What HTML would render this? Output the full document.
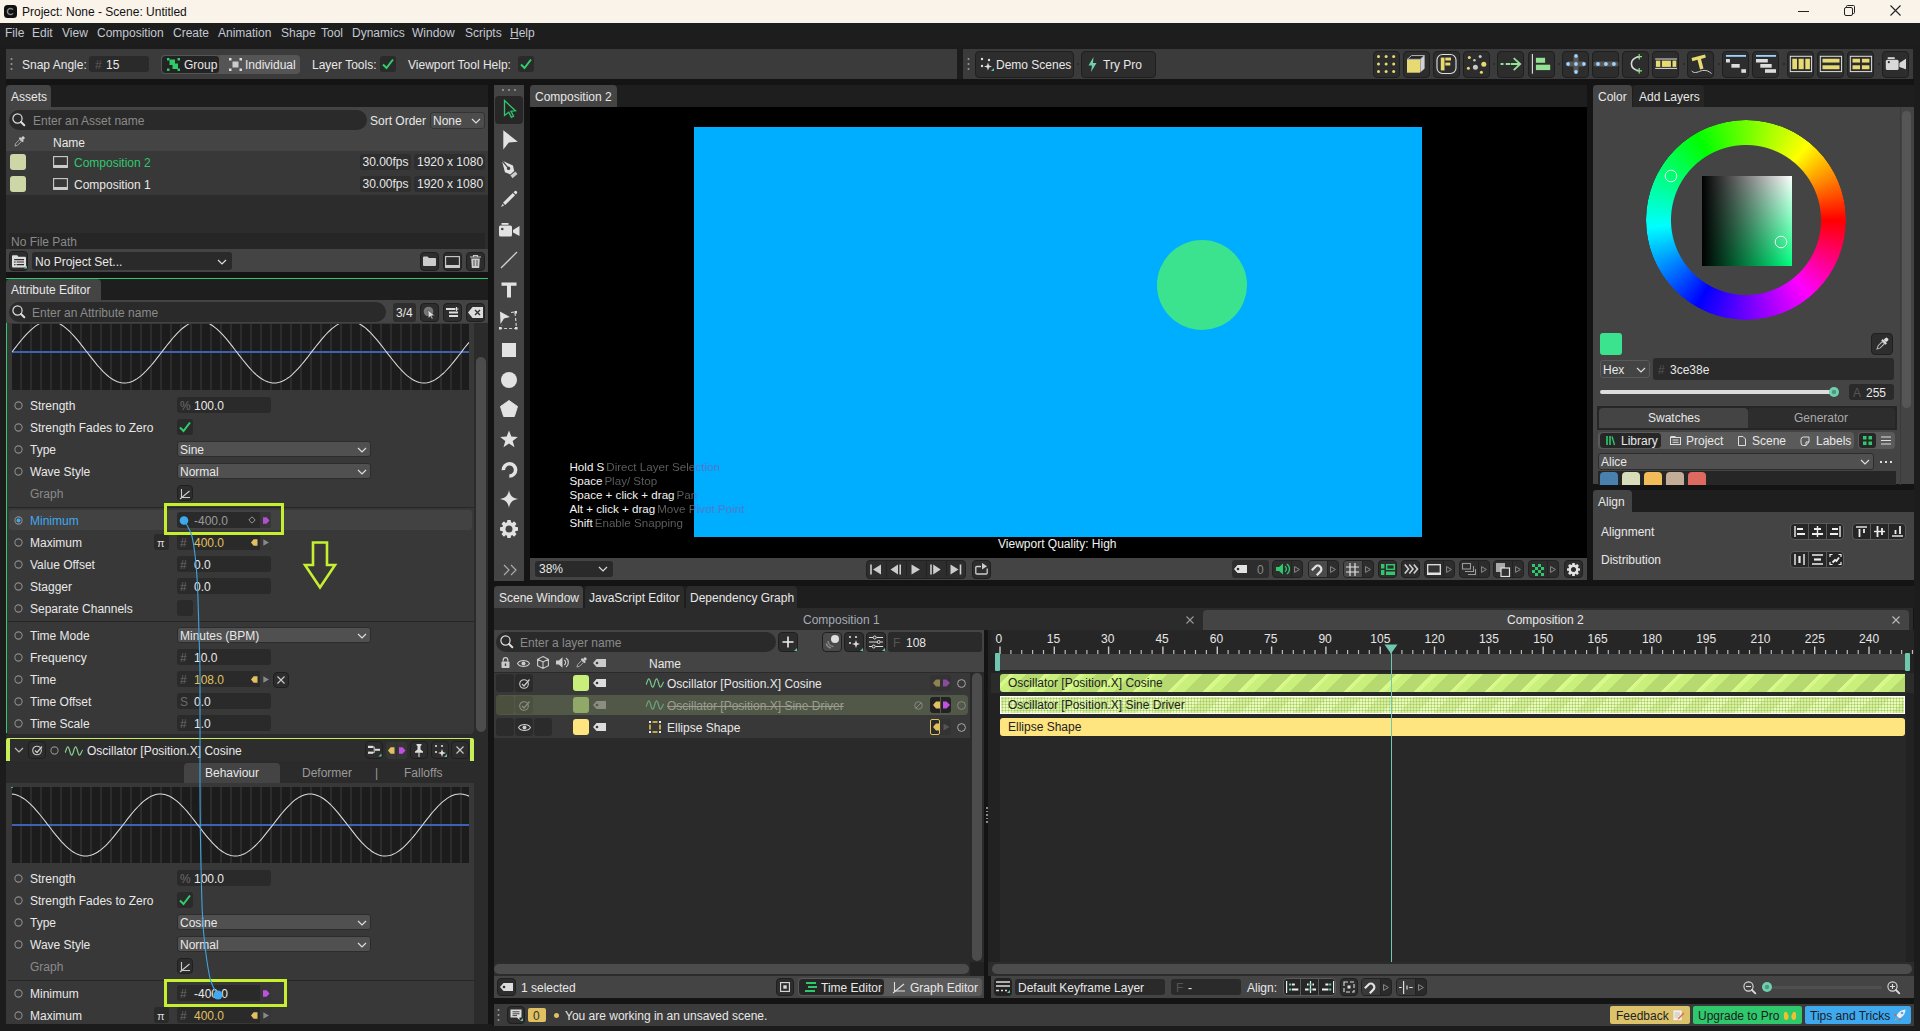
<!DOCTYPE html>
<html lang="en"><head><meta charset="utf-8"><title>Project: None - Scene: Untitled</title>
<style>
html,body{margin:0;padding:0}
body{width:1920px;height:1031px;overflow:hidden;position:relative;background:#1c1c1c;font-family:"Liberation Sans",sans-serif;font-size:12px;color:#e4e4e4}
.a{position:absolute;box-sizing:border-box}
.t{position:absolute;white-space:nowrap}
.f{background:#2a2a2a;border-radius:3px}
.b{background:#2d2d2d;border:1px solid #1f1f1f;border-radius:4px}
.dd{background:#505050;border:1px solid #2c2c2c;border-radius:3px}
svg{overflow:visible}
.hd{margin-left:2px;color:transparent;background:linear-gradient(90deg,#5e5e5e 694px,#5a70c2 694px) fixed;-webkit-background-clip:text;background-clip:text}
</style></head>
<body>
<div class="a" style="left:0px;top:0px;width:1920px;height:23px;background:#f9f3ea;"></div>
<svg class="a" style="left:4px;top:5px;" width="13" height="13" viewBox="0 0 13 13"><rect x="0" y="0" width="13" height="13" rx="3.5" fill="#111"/><path d="M9 4.6A3.1 3.1 0 1 0 9 8.4" fill="none" stroke="#888" stroke-width="1.5"/></svg>
<div class="t" style="left:22px;top:3px;height:18px;line-height:18px;color:#111;">Project: None - Scene: Untitled</div>
<svg class="a" style="left:1798px;top:11px;" width="11" height="1" viewBox="0 0 11 1"><rect width="11" height="1" fill="#222"/></svg>
<svg class="a" style="left:1844px;top:4.5px;" width="11" height="11" viewBox="0 0 11 11"><rect x="0.5" y="2.5" width="8" height="8" rx="1.5" fill="none" stroke="#222"/><path d="M2.5 2.5V1.5a1 1 0 0 1 1-1H9.5a1 1 0 0 1 1 1V7.5a1 1 0 0 1-1 1H8.5" fill="none" stroke="#222"/></svg>
<svg class="a" style="left:1889.5px;top:4.5px;" width="11" height="11" viewBox="0 0 11 11"><path d="M0.5 0.5L10.5 10.5M10.5 0.5L0.5 10.5" stroke="#222" stroke-width="1.1"/></svg>
<div class="a" style="left:0px;top:23px;width:1920px;height:21px;background:#1d1d1d;"></div>
<div class="t" style="left:5px;top:25px;height:16px;line-height:16px;color:#c3c8d2;">File</div>
<div class="t" style="left:32px;top:25px;height:16px;line-height:16px;color:#c3c8d2;">Edit</div>
<div class="t" style="left:62px;top:25px;height:16px;line-height:16px;color:#c3c8d2;">View</div>
<div class="t" style="left:97px;top:25px;height:16px;line-height:16px;color:#c3c8d2;">Composition</div>
<div class="t" style="left:173px;top:25px;height:16px;line-height:16px;color:#c3c8d2;">Create</div>
<div class="t" style="left:218px;top:25px;height:16px;line-height:16px;color:#c3c8d2;">Animation</div>
<div class="t" style="left:281px;top:25px;height:16px;line-height:16px;color:#c3c8d2;">Shape</div>
<div class="t" style="left:321px;top:25px;height:16px;line-height:16px;color:#c3c8d2;">Tool</div>
<div class="t" style="left:352px;top:25px;height:16px;line-height:16px;color:#c3c8d2;">Dynamics</div>
<div class="t" style="left:412px;top:25px;height:16px;line-height:16px;color:#c3c8d2;">Window</div>
<div class="t" style="left:465px;top:25px;height:16px;line-height:16px;color:#c3c8d2;">Scripts</div>
<div class="t" style="left:510px;top:25px;height:16px;line-height:16px;color:#c3c8d2;"><u>H</u>elp</div>
<div class="a" style="left:6px;top:49px;width:951px;height:30px;background:#3b3b3b;"></div>
<svg class="a" style="left:10px;top:57px;" width="3" height="14" viewBox="0 0 3 14"><circle cx="1.5" cy="2" r="1" fill="#999"/><circle cx="1.5" cy="7" r="1" fill="#999"/><circle cx="1.5" cy="12" r="1" fill="#999"/></svg>
<div class="t" style="left:22px;top:56.5px;height:16px;line-height:16px;color:#e8e8e8;">Snap Angle:</div>
<div class="a f" style="left:89px;top:56px;width:60px;height:16px;"></div>
<div class="t" style="left:95px;top:56.5px;height:16px;line-height:16px;color:#5a5a5a;">#</div>
<div class="t" style="left:106px;top:56.5px;height:16px;line-height:16px;color:#e8e8e8;">15</div>
<div class="a" style="left:161px;top:55px;width:139px;height:19px;background:#555;border-radius:4px"></div>
<div class="a" style="left:161px;top:55px;width:59px;height:19px;background:#232323;border-radius:4px;border:1px solid #555"></div>
<svg class="a" style="left:167px;top:58px;" width="13" height="13" viewBox="0 0 13 13"><g fill="#2fca6a"><rect x="0" y="0" width="2.5" height="2.5"/><rect x="10.5" y="0" width="2.5" height="2.5"/><rect x="0" y="10.5" width="2.5" height="2.5"/><rect x="10.5" y="10.5" width="2.5" height="2.5"/><rect x="2.5" y="1.5" width="5.5" height="5.5"/><rect x="5.5" y="5.5" width="5.5" height="5.5"/></g></svg>
<div class="t" style="left:184px;top:56.5px;height:16px;line-height:16px;color:#e8e8e8;">Group</div>
<svg class="a" style="left:229px;top:58px;" width="13" height="13" viewBox="0 0 13 13"><g fill="#ddd"><rect x="0" y="0" width="2.5" height="2.5"/><rect x="10.5" y="0" width="2.5" height="2.5"/><rect x="0" y="10.5" width="2.5" height="2.5"/><rect x="10.5" y="10.5" width="2.5" height="2.5"/><rect x="3.5" y="3.5" width="6" height="6" fill="#ccc"/></g></svg>
<div class="t" style="left:245px;top:56.5px;height:16px;line-height:16px;color:#e8e8e8;">Individual</div>
<div class="t" style="left:312px;top:56.5px;height:16px;line-height:16px;color:#e8e8e8;">Layer Tools:</div>
<div class="a f" style="left:380px;top:56px;width:16px;height:16px;"></div>
<svg class="a" style="left:380px;top:56px;" width="16" height="16" viewBox="0 0 16 16"><path d="M3 8.5L6.5 12L13 3.5" fill="none" stroke="#2fd06c" stroke-width="2"/></svg>
<div class="t" style="left:408px;top:56.5px;height:16px;line-height:16px;color:#e8e8e8;">Viewport Tool Help:</div>
<div class="a f" style="left:518px;top:56px;width:16px;height:16px;"></div>
<svg class="a" style="left:518px;top:56px;" width="16" height="16" viewBox="0 0 16 16"><path d="M3 8.5L6.5 12L13 3.5" fill="none" stroke="#2fd06c" stroke-width="2"/></svg>
<div class="a" style="left:963px;top:49px;width:950px;height:30px;background:#3b3b3b;"></div>
<svg class="a" style="left:967px;top:57px;" width="3" height="14" viewBox="0 0 3 14"><circle cx="1.5" cy="2" r="1" fill="#999"/><circle cx="1.5" cy="7" r="1" fill="#999"/><circle cx="1.5" cy="12" r="1" fill="#999"/></svg>
<div class="a b" style="left:975px;top:51px;width:99px;height:27px;"></div>
<svg class="a" style="left:980px;top:57px;" width="14" height="14" viewBox="0 0 14 14"><g fill="#ddd"><circle cx="2" cy="2" r="1.2"/><circle cx="9" cy="3" r="1.2"/><circle cx="2" cy="9" r="1.2"/><path d="M8 5.5L9 8.5L12 9.5L9 10.5L8 13.5L7 10.5L4 9.5L7 8.5Z"/></g><path d="M14 11v3h-3z" fill="#5fc7a0"/></svg>
<div class="t" style="left:996px;top:56.5px;height:16px;line-height:16px;color:#e8e8e8;">Demo Scenes</div>
<div class="a" style="left:1077px;top:63px;width:2px;height:2px;background:#2a2a2a;"></div>
<div class="a b" style="left:1081px;top:51px;width:75px;height:27px;"></div>
<svg class="a" style="left:1088px;top:57px;" width="9" height="15" viewBox="0 0 9 15"><path d="M5.5 0L0.5 8.5H4L3 15L8.5 6H5Z" fill="#6fd0aa"/></svg>
<div class="t" style="left:1103px;top:56.5px;height:16px;line-height:16px;color:#e8e8e8;">Try Pro</div>
<div class="a b" style="left:1373px;top:51px;width:27px;height:27px;"></div>
<svg class="a" style="left:1377px;top:55px" width="19" height="19" viewBox="0 0 19 19"><circle cx="1.5" cy="1.5" r="1.5" fill="#e8da72"/><circle cx="9.1" cy="1.5" r="1.5" fill="#e8da72"/><circle cx="16.7" cy="1.5" r="1.5" fill="#e8da72"/><circle cx="1.5" cy="9.1" r="1.5" fill="#e8da72"/><circle cx="9.1" cy="9.1" r="1.5" fill="#e8da72"/><circle cx="16.7" cy="9.1" r="1.5" fill="#e8da72"/><circle cx="1.5" cy="16.6" r="1.5" fill="#e8da72"/><circle cx="9.1" cy="16.6" r="1.5" fill="#e8da72"/><circle cx="16.7" cy="16.6" r="1.5" fill="#e8da72"/></svg>
<div class="a b" style="left:1403px;top:51px;width:27px;height:27px;"></div>
<svg class="a" style="left:1407px;top:55px" width="19" height="19" viewBox="0 0 19 19"><path d="M0 4.6H13V17.7H0Z" fill="#e8da72"/><path d="M0.3 4.3L4.6 0.6H17.4L13.2 4.3Z" fill="#222" stroke="#ddd" stroke-width="0.8"/><path d="M13.3 4.6L17.6 0.8V13.6L13.3 17.6Z" fill="#d2d2d2"/></svg>
<div class="a b" style="left:1433px;top:51px;width:27px;height:27px;"></div>
<svg class="a" style="left:1437px;top:55px" width="19" height="19" viewBox="0 0 19 19"><rect x="0" y="-0.5" width="19" height="19" rx="5.5" fill="none" stroke="#e0e0e0" stroke-width="1.1"/><rect x="3.8" y="2.6" width="3.7" height="12.8" fill="#e8da72"/><rect x="8.3" y="2.6" width="5.7" height="2.9" fill="#e8da72"/><rect x="8.3" y="7.6" width="5" height="2.9" fill="#e8da72"/></svg>
<div class="a b" style="left:1463px;top:51px;width:27px;height:27px;"></div>
<svg class="a" style="left:1467px;top:55px" width="19" height="19" viewBox="0 0 19 19"><circle cx="2.3" cy="2.4" r="1.5" fill="#e8da72"/><circle cx="16.8" cy="9.3" r="2.5" fill="#e8da72"/><circle cx="1.4" cy="13.3" r="1.5" fill="#e8da72"/><circle cx="14.4" cy="17.2" r="1.5" fill="#e8da72"/><circle cx="13.2" cy="1.4" r="1.5" fill="#c8c8c8"/><circle cx="7.4" cy="5.3" r="1.3" fill="#c8c8c8"/><circle cx="8.4" cy="12.3" r="2.5" fill="#c8c8c8"/></svg>
<div class="a" style="left:1493px;top:63px;width:2px;height:2px;background:#2a2a2a;"></div>
<div class="a b" style="left:1497px;top:51px;width:27px;height:27px;"></div>
<svg class="a" style="left:1501px;top:55px" width="19" height="19" viewBox="0 0 19 19"><path d="M-0.4 9H2.5M4.7 9H9.1M9.8 9H19" stroke="#94e094" stroke-width="1.8"/><path d="M12.7 3.1L19.2 9L12.7 15.1" fill="none" stroke="#94e094" stroke-width="1.8"/></svg>
<div class="a b" style="left:1528px;top:51px;width:27px;height:27px;"></div>
<svg class="a" style="left:1532px;top:55px" width="19" height="19" viewBox="0 0 19 19"><path d="M0.4 -1V18.7" stroke="#e0e0e0" stroke-width="1.1"/><rect x="3.9" y="2.8" width="9.2" height="5" fill="#94e094"/><rect x="3.9" y="9.7" width="14.3" height="5.4" fill="#94e094"/></svg>
<div class="a" style="left:1558px;top:63px;width:2px;height:2px;background:#2a2a2a;"></div>
<div class="a b" style="left:1562px;top:51px;width:27px;height:27px;"></div>
<svg class="a" style="left:1566px;top:55px" width="19" height="19" viewBox="0 0 19 19"><path d="M10 1V17M2 9H18" stroke="#585858" stroke-width="5"/><circle cx="10" cy="9" r="1.9" fill="#9ed2ff"/><circle cx="10" cy="0.9" r="1.9" fill="#9ed2ff"/><circle cx="10" cy="17" r="1.9" fill="#9ed2ff"/><circle cx="2" cy="9" r="1.9" fill="#9ed2ff"/><circle cx="18" cy="9" r="1.9" fill="#9ed2ff"/></svg>
<div class="a b" style="left:1592px;top:51px;width:27px;height:27px;"></div>
<svg class="a" style="left:1596px;top:55px" width="19" height="19" viewBox="0 0 19 19"><path d="M0 9H20" stroke="#585858" stroke-width="5" stroke-linecap="round"/><circle cx="2" cy="9" r="1.9" fill="#9ed2ff"/><circle cx="9.9" cy="9" r="1.9" fill="#9ed2ff"/><circle cx="17.9" cy="9" r="1.9" fill="#9ed2ff"/></svg>
<div class="a b" style="left:1622px;top:51px;width:27px;height:27px;"></div>
<svg class="a" style="left:1626px;top:55px" width="19" height="19" viewBox="0 0 19 19"><path d="M13.2 1.7C2.8 3.5 2.8 14 13.2 15.8" fill="none" stroke="#d8d8d8" stroke-width="1.6"/><path d="M13.2 -1V4.4M10.5 1.7H15.9M13.2 13.1V18.5M10.5 15.8H15.9" stroke="#94e094" stroke-width="1.2"/></svg>
<div class="a b" style="left:1652px;top:51px;width:27px;height:27px;"></div>
<svg class="a" style="left:1656px;top:55px" width="19" height="19" viewBox="0 0 19 19"><path d="M-0.8 4H21M-0.8 13.4H21" stroke="#e0e0e0" stroke-width="1"/><rect x="-0.1" y="5.6" width="4.4" height="6.3" fill="#e8da72"/><rect x="5.9" y="5.6" width="9" height="6.3" fill="#e8da72"/><rect x="16.5" y="5.6" width="3.8" height="6.3" fill="#e8da72"/></svg>
<div class="a" style="left:1683px;top:63px;width:2px;height:2px;background:#2a2a2a;"></div>
<div class="a b" style="left:1687px;top:51px;width:27px;height:27px;"></div>
<svg class="a" style="left:1691px;top:55px" width="19" height="19" viewBox="0 0 19 19"><path d="M0.5 3L14 -0.6L14.9 2.6L10 3.9L12.5 13.6L9 14.5L6.5 4.8L1.4 6.2Z" fill="#e8da72"/><path d="M0.7 16C4 19.5 8 16 11.5 15.5C15.5 15 17.5 16 20.5 18.5" fill="none" stroke="#d0d0d0" stroke-width="1"/></svg>
<div class="a" style="left:1718px;top:63px;width:2px;height:2px;background:#2a2a2a;"></div>
<div class="a b" style="left:1722px;top:51px;width:27px;height:27px;"></div>
<svg class="a" style="left:1726px;top:55px" width="19" height="19" viewBox="0 0 19 19"><path d="M0 0.9H20" stroke="#9ed2ff" stroke-width="1.8"/><rect x="0" y="4" width="3.9" height="3.5" fill="#dcdcdc"/><rect x="5.4" y="9" width="8.3" height="3.7" fill="#dcdcdc"/><rect x="15.3" y="14.2" width="4.7" height="3.6" fill="#dcdcdc"/></svg>
<div class="a b" style="left:1752px;top:51px;width:27px;height:27px;"></div>
<svg class="a" style="left:1756px;top:55px" width="19" height="19" viewBox="0 0 19 19"><path d="M0 0.9H20" stroke="#9ed2ff" stroke-width="1.8"/><rect x="0" y="4" width="11.8" height="3.5" fill="#dcdcdc"/><rect x="4.3" y="9" width="11.4" height="3.7" fill="#dcdcdc"/><rect x="9" y="14.2" width="11" height="3.6" fill="#dcdcdc"/></svg>
<div class="a" style="left:1783px;top:63px;width:2px;height:2px;background:#2a2a2a;"></div>
<div class="a b" style="left:1787px;top:51px;width:27px;height:27px;"></div>
<svg class="a" style="left:1791px;top:55px" width="19" height="19" viewBox="0 0 19 19"><rect x="-0.7" y="1.3" width="21.3" height="15.3" fill="none" stroke="#e0e0e0" stroke-width="1"/><rect x="1.3" y="3.75" width="4.7" height="10.4" fill="#e8da72"/><rect x="7.6" y="3.75" width="5.1" height="10.4" fill="#e8da72"/><rect x="14.3" y="3.75" width="4.6" height="10.4" fill="#e8da72"/></svg>
<div class="a b" style="left:1817px;top:51px;width:27px;height:27px;"></div>
<svg class="a" style="left:1821px;top:55px" width="19" height="19" viewBox="0 0 19 19"><rect x="-0.7" y="1.3" width="21.3" height="15.3" fill="none" stroke="#e0e0e0" stroke-width="1"/><rect x="1.5" y="3.75" width="17" height="3.8" fill="#e8da72"/><rect x="1.5" y="10.3" width="17" height="3.9" fill="#e8da72"/></svg>
<div class="a b" style="left:1847px;top:51px;width:27px;height:27px;"></div>
<svg class="a" style="left:1851px;top:55px" width="19" height="19" viewBox="0 0 19 19"><rect x="-0.7" y="1.3" width="21.3" height="15.3" fill="none" stroke="#e0e0e0" stroke-width="1"/><rect x="1.5" y="3.75" width="7.5" height="3.8" fill="#e8da72"/><rect x="10.9" y="3.75" width="7.5" height="3.8" fill="#e8da72"/><rect x="1.5" y="10.3" width="7.5" height="3.9" fill="#e8da72"/><rect x="10.9" y="10.3" width="7.5" height="3.9" fill="#e8da72"/></svg>
<div class="a" style="left:1878px;top:63px;width:2px;height:2px;background:#2a2a2a;"></div>
<div class="a b" style="left:1882px;top:51px;width:27px;height:27px;"></div>
<svg class="a" style="left:1886px;top:55px" width="19" height="19" viewBox="0 0 19 19"><rect x="-0.2" y="4.8" width="12.8" height="10.2" rx="1.5" fill="#d8d8d8"/><path d="M13.7 10L19.9 3.8V14.2L13.7 10.5Z" fill="#d8d8d8"/><path d="M13.4 8L19.9 3.8V14.2L13.4 12Z" fill="#d8d8d8"/><rect x="1.7" y="2.2" width="7" height="1.8" fill="#d8d8d8"/><circle cx="2.8" cy="7.2" r="1.1" fill="#2d2d2d"/></svg>
<div class="a" style="left:6px;top:79px;width:1908px;height:947px;background:#141414;"></div>
<div class="a" style="left:6px;top:85px;width:482px;height:22px;background:#1e1e1e;"></div>
<div class="a" style="left:6px;top:279px;width:482px;height:22px;background:#1e1e1e;"></div>
<div class="a" style="left:530px;top:85px;width:1057px;height:22px;background:#1e1e1e;"></div>
<div class="a" style="left:1593px;top:85px;width:321px;height:22px;background:#1e1e1e;"></div>
<div class="a" style="left:1593px;top:490px;width:321px;height:22px;background:#1e1e1e;"></div>
<div class="a" style="left:494px;top:586px;width:1420px;height:22px;background:#1e1e1e;"></div>
<div class="a" style="left:6px;top:85px;width:45px;height:22px;background:#444;border-radius:4px 4px 0 0"></div>
<div class="t" style="left:11px;top:88.5px;height:16px;line-height:16px;color:#e8e8e8;">Assets</div>
<div class="a" style="left:6px;top:107px;width:482px;height:45px;background:#444;"></div>
<div class="a" style="left:6px;top:151px;width:482px;height:44px;background:#383838;"></div>
<div class="a" style="left:6px;top:195px;width:482px;height:55px;background:#2c2c2c;"></div>
<div class="a" style="left:9px;top:110px;width:358px;height:20px;background:#2a2a2a;border-radius:10px"></div>
<svg class="a" style="left:12px;top:113px;" width="14" height="14" viewBox="0 0 14 14"><circle cx="5.5" cy="5.5" r="4.6" fill="none" stroke="#ddd" stroke-width="1.2"/><path d="M9 9L12.3 12.3" stroke="#ddd" stroke-width="2" stroke-linecap="round"/></svg>
<div class="t" style="left:33px;top:112.5px;height:16px;line-height:16px;color:#8a8a8a;">Enter an Asset name</div>
<div class="t" style="left:370px;top:112.5px;height:16px;line-height:16px;color:#e8e8e8;">Sort Order</div>
<div class="a dd" style="left:430px;top:112px;width:55px;height:17px;background:#4c4c4c;border-color:#333"></div>
<div class="t" style="left:433px;top:112.5px;height:16px;line-height:16px;color:#e8e8e8;">None</div>
<svg class="a" style="left:471px;top:118px;" width="10" height="6" viewBox="0 0 10 6"><path d="M1 1L5 5L9 1" fill="none" stroke="#ddd" stroke-width="1.2"/></svg>
<svg class="a" style="left:13px;top:135px;" width="13" height="13" viewBox="0 0 13 13"><g transform="rotate(45 6.5 6.5)"><rect x="5" y="0" width="3" height="3.2" rx="1" fill="#ccc"/><rect x="3.8" y="3" width="5.4" height="1.8" fill="#ccc"/><path d="M5.2 5h2.6v5.5L6.5 13L5.2 10.5Z" fill="none" stroke="#aaa" stroke-width="0.9"/></g></svg>
<div class="t" style="left:53px;top:134.8px;height:16px;line-height:16px;color:#e8e8e8;">Name</div>
<div class="a" style="left:10px;top:154px;width:16px;height:16px;background:#cdd6a6;border-radius:3px"></div>
<svg class="a" style="left:53px;top:156px;" width="15" height="12" viewBox="0 0 15 12"><rect x="0.6" y="0.6" width="13.8" height="10.8" fill="none" stroke="#ccc" stroke-width="1.1"/><rect x="0.6" y="9" width="13.8" height="2.6" fill="#ccc"/></svg>
<div class="t" style="left:74px;top:154.5px;height:16px;line-height:16px;color:#2fc86d;">Composition 2</div>
<div class="a" style="left:360px;top:154px;width:51px;height:16px;background:#2e2e2e;border-radius:3px"></div>
<div class="t" style="left:362.5px;top:154px;height:16px;line-height:16px;color:#e8e8e8;">30.00fps</div>
<div class="a" style="left:414px;top:154px;width:71px;height:16px;background:#2e2e2e;border-radius:3px"></div>
<div class="t" style="left:417px;top:154px;height:16px;line-height:16px;color:#e8e8e8;">1920 x 1080</div>
<div class="a" style="left:10px;top:176px;width:16px;height:16px;background:#cdd6a6;border-radius:3px"></div>
<svg class="a" style="left:53px;top:178px;" width="15" height="12" viewBox="0 0 15 12"><rect x="0.6" y="0.6" width="13.8" height="10.8" fill="none" stroke="#ccc" stroke-width="1.1"/><rect x="0.6" y="9" width="13.8" height="2.6" fill="#ccc"/></svg>
<div class="t" style="left:74px;top:176.5px;height:16px;line-height:16px;color:#e8e8e8;">Composition 1</div>
<div class="a" style="left:360px;top:176px;width:51px;height:16px;background:#2e2e2e;border-radius:3px"></div>
<div class="t" style="left:362.5px;top:176px;height:16px;line-height:16px;color:#e8e8e8;">30.00fps</div>
<div class="a" style="left:414px;top:176px;width:71px;height:16px;background:#2e2e2e;border-radius:3px"></div>
<div class="t" style="left:417px;top:176px;height:16px;line-height:16px;color:#e8e8e8;">1920 x 1080</div>
<div class="a" style="left:9px;top:233px;width:476px;height:16px;background:#262626;border-radius:2px"></div>
<div class="t" style="left:11px;top:234.3px;height:16px;line-height:16px;color:#8a8a8a;">No File Path</div>
<div class="a" style="left:6px;top:249px;width:482px;height:23px;background:#444;"></div>
<div class="a b" style="left:9px;top:251px;width:19px;height:20px;"></div>
<svg class="a" style="left:12px;top:255px;" width="14" height="13" viewBox="0 0 14 13"><path d="M0 1.2a1 1 0 0 1 1-1h4.2l1.2 1.6H13a1 1 0 0 1 1 1V11.5a1 1 0 0 1-1 1H1a1 1 0 0 1-1-1Z" fill="#ddd"/><path d="M2.2 4.6H12M4.6 7H12M4.6 9.6H12" stroke="#2d2d2d" stroke-width="1.1"/><rect x="2.2" y="6.4" width="1.3" height="1.3" fill="#2d2d2d"/><rect x="2.2" y="9" width="1.3" height="1.3" fill="#2d2d2d"/><path d="M15 10.5v3h-3z" fill="#5fc7a0"/></svg>
<div class="a" style="left:32px;top:252px;width:200px;height:18px;background:#2a2a2a;border-radius:3px"></div>
<div class="t" style="left:35px;top:254px;height:16px;line-height:16px;color:#e8e8e8;">No Project Set...</div>
<svg class="a" style="left:217px;top:259px;" width="10" height="6" viewBox="0 0 10 6"><path d="M1 1L5 5L9 1" fill="none" stroke="#ddd" stroke-width="1.2"/></svg>
<div class="a b" style="left:420px;top:252px;width:19px;height:19px;"></div>
<svg class="a" style="left:423px;top:256px;" width="13" height="10" viewBox="0 0 13 10"><path d="M0 1.5a1 1 0 0 1 1-1h3.5l1.5 1.5H12a1 1 0 0 1 1 1V9a1 1 0 0 1-1 1H1a1 1 0 0 1-1-1Z" fill="#ccc"/></svg>
<div class="a b" style="left:443px;top:252px;width:19px;height:19px;"></div>
<svg class="a" style="left:445px;top:256px;" width="15" height="12" viewBox="0 0 15 12"><rect x="0.6" y="0.6" width="13.8" height="10.8" fill="none" stroke="#ccc" stroke-width="1.1"/><rect x="0.6" y="9" width="13.8" height="2.6" fill="#ccc"/></svg>
<div class="a b" style="left:466px;top:252px;width:19px;height:19px;"></div>
<svg class="a" style="left:470px;top:255px;" width="11" height="13" viewBox="0 0 11 13"><path d="M0 2h11M3.5 2V0.5h4V2" stroke="#ccc" fill="none" stroke-width="1.2"/><path d="M1.2 3.5h8.6l-0.6 9.5H1.8Z" fill="#ccc"/><path d="M4 5v6M7 5v6" stroke="#444" stroke-width="0.9"/></svg>
<div class="a" style="left:6px;top:277.6px;width:482px;height:1.4px;background:#2fc86d;"></div>
<div class="a" style="left:6px;top:279px;width:95px;height:21px;background:#444;border-radius:4px 4px 0 0"></div>
<div class="t" style="left:11px;top:281.5px;height:16px;line-height:16px;color:#e8e8e8;">Attribute Editor</div>
<div class="a" style="left:6px;top:300px;width:482px;height:23px;background:#444;"></div>
<div class="a" style="left:6px;top:323px;width:482px;height:701px;background:#2b2b2b;"></div>
<div class="a" style="left:6px;top:323px;width:468px;height:411px;background:#383838;border-radius:0 0 4px 4px"></div>
<div class="a" style="left:6px;top:783px;width:468px;height:241px;background:#383838;"></div>
<div class="a" style="left:9px;top:302px;width:377px;height:20px;background:#2a2a2a;border-radius:10px"></div>
<svg class="a" style="left:12px;top:305px;" width="14" height="14" viewBox="0 0 14 14"><circle cx="5.5" cy="5.5" r="4.6" fill="none" stroke="#ddd" stroke-width="1.2"/><path d="M9 9L12.3 12.3" stroke="#ddd" stroke-width="2" stroke-linecap="round"/></svg>
<div class="t" style="left:32px;top:304.5px;height:16px;line-height:16px;color:#8a8a8a;">Enter an Attribute name</div>
<div class="a" style="left:393px;top:303px;width:23px;height:19px;background:#2e2e2e;border-radius:3px"></div>
<div class="t" style="left:396px;top:304.5px;height:16px;line-height:16px;color:#e8e8e8;">3/4</div>
<div class="a b" style="left:420px;top:303px;width:19px;height:19px;"></div>
<svg class="a" style="left:423px;top:306px;" width="13" height="13" viewBox="0 0 13 13"><circle cx="5.5" cy="5.5" r="4.8" fill="#777"/><path d="M5 4L11.5 9.5L8.6 9.8L10 12.6L8.8 13.1L7.5 10.3L5.4 12Z" fill="#ddd" stroke="#333" stroke-width="0.5"/></svg>
<div class="a b" style="left:443px;top:303px;width:19px;height:19px;"></div>
<svg class="a" style="left:446px;top:307px;" width="13" height="11" viewBox="0 0 13 11"><path d="M0 2h9M3 5.5h9M3 9h9" stroke="#ddd" stroke-width="1.8"/><path d="M10.5 0v4M8.5 2h4" stroke="#ddd" stroke-width="1.2"/></svg>
<div class="a b" style="left:466px;top:303px;width:19px;height:19px;"></div>
<svg class="a" style="left:468px;top:307px;" width="15" height="11" viewBox="0 0 15 11"><path d="M4.5 0H15V11H4.5L0 5.5Z" fill="#ddd"/><path d="M7 3L12 8M12 3L7 8" stroke="#333" stroke-width="1.4"/></svg>
<div class="a" style="left:476px;top:357px;width:10px;height:375px;background:#4c4c4c;border-radius:5px"></div>
<div class="a" style="left:6px;top:323px;width:1px;height:410px;background:#2fc86d;"></div>
<div class="a" style="left:12px;top:324px;width:457px;height:66px;background:#1c1c1c;background-image:repeating-linear-gradient(90deg,#1c1c1c 0,#1c1c1c 8px,#2c2c2c 8px,#2c2c2c 10px);"></div>
<svg class="a" style="left:12px;top:324px;overflow:hidden" width="457" height="66" viewBox="0 0 457 66"><path d="M0 28H457" stroke="#3c62b2" stroke-width="2"/><polyline points="0.0,28.0 2.0,25.4 4.0,22.9 6.0,20.3 7.9,17.9 9.9,15.5 11.9,13.1 13.9,10.9 15.9,8.8 17.9,6.9 19.9,5.1 21.9,3.4 23.8,1.9 25.8,0.6 27.8,-0.5 29.8,-1.4 31.8,-2.1 33.8,-2.6 35.8,-2.9 37.8,-3.0 39.7,-2.9 41.7,-2.5 43.7,-1.9 45.7,-1.2 47.7,-0.2 49.7,1.0 51.7,2.3 53.6,3.9 55.6,5.6 57.6,7.4 59.6,9.5 61.6,11.6 63.6,13.8 65.6,16.2 67.6,18.6 69.5,21.1 71.5,23.6 73.5,26.2 75.5,28.8 77.5,31.4 79.5,33.9 81.5,36.4 83.5,38.9 85.4,41.3 87.4,43.5 89.4,45.7 91.4,47.8 93.4,49.7 95.4,51.5 97.4,53.1 99.3,54.5 101.3,55.7 103.3,56.8 105.3,57.7 107.3,58.3 109.3,58.7 111.3,59.0 113.3,59.0 115.2,58.8 117.2,58.4 119.2,57.7 121.2,56.9 123.2,55.8 125.2,54.6 127.2,53.2 129.2,51.6 131.1,49.9 133.1,48.0 135.1,45.9 137.1,43.7 139.1,41.5 141.1,39.1 143.1,36.6 145.0,34.1 147.0,31.6 149.0,29.0 151.0,26.4 153.0,23.9 155.0,21.3 157.0,18.8 159.0,16.4 160.9,14.0 162.9,11.8 164.9,9.6 166.9,7.6 168.9,5.7 170.9,4.0 172.9,2.5 174.9,1.1 176.8,-0.1 178.8,-1.1 180.8,-1.9 182.8,-2.5 184.8,-2.8 186.8,-3.0 188.8,-2.9 190.7,-2.7 192.7,-2.2 194.7,-1.5 196.7,-0.6 198.7,0.5 200.7,1.8 202.7,3.3 204.7,4.9 206.6,6.7 208.6,8.7 210.6,10.7 212.6,12.9 214.6,15.2 216.6,17.6 218.6,20.1 220.6,22.6 222.5,25.2 224.5,27.8 226.5,30.4 228.5,32.9 230.5,35.5 232.5,37.9 234.5,40.3 236.4,42.7 238.4,44.9 240.4,47.0 242.4,49.0 244.4,50.8 246.4,52.5 248.4,54.0 250.4,55.3 252.3,56.4 254.3,57.3 256.3,58.1 258.3,58.6 260.3,58.9 262.3,59.0 264.3,58.9 266.3,58.5 268.2,58.0 270.2,57.2 272.2,56.3 274.2,55.1 276.2,53.8 278.2,52.3 280.2,50.6 282.1,48.7 284.1,46.7 286.1,44.6 288.1,42.4 290.1,40.0 292.1,37.6 294.1,35.1 296.1,32.6 298.0,30.0 300.0,27.4 302.0,24.9 304.0,22.3 306.0,19.8 308.0,17.3 310.0,14.9 312.0,12.6 313.9,10.5 315.9,8.4 317.9,6.5 319.9,4.7 321.9,3.1 323.9,1.6 325.9,0.4 327.8,-0.7 329.8,-1.6 331.8,-2.3 333.8,-2.7 335.8,-3.0 337.8,-3.0 339.8,-2.8 341.8,-2.4 343.7,-1.8 345.7,-1.0 347.7,0.1 349.7,1.3 351.7,2.7 353.7,4.2 355.7,6.0 357.7,7.9 359.6,9.9 361.6,12.1 363.6,14.3 365.6,16.7 367.6,19.1 369.6,21.6 371.6,24.2 373.5,26.8 375.5,29.3 377.5,31.9 379.5,34.5 381.5,37.0 383.5,39.4 385.5,41.8 387.5,44.0 389.4,46.2 391.4,48.2 393.4,50.1 395.4,51.8 397.4,53.4 399.4,54.8 401.4,56.0 403.4,57.0 405.3,57.8 407.3,58.4 409.3,58.8 411.3,59.0 413.3,59.0 415.3,58.7 417.3,58.2 419.2,57.6 421.2,56.7 423.2,55.6 425.2,54.3 427.2,52.9 429.2,51.2 431.2,49.5 433.2,47.5 435.1,45.5 437.1,43.3 439.1,41.0 441.1,38.6 443.1,36.1 445.1,33.6 447.1,31.0 449.1,28.5 451.0,25.9 453.0,23.3 455.0,20.8 457.0,18.3" fill="none" stroke="#dcdcdc" stroke-width="1.05"/></svg>
<svg class="a" style="left:14px;top:401.0px;" width="9" height="9" viewBox="0 0 9 9"><circle cx="4.5" cy="4.5" r="3.6" fill="none" stroke="#8a8a8a" stroke-width="1.1"/></svg>
<div class="t" style="left:30px;top:397.5px;height:16px;line-height:16px;color:#e8e8e8;">Strength</div>
<div class="a f" style="left:177px;top:397.0px;width:94px;height:16px;"></div>
<div class="t" style="left:180px;top:397.5px;height:16px;line-height:16px;color:#6a6a6a;">%</div>
<div class="t" style="left:194px;top:397.5px;height:16px;line-height:16px;color:#e8e8e8;">100.0</div>
<svg class="a" style="left:14px;top:423.0px;" width="9" height="9" viewBox="0 0 9 9"><circle cx="4.5" cy="4.5" r="3.6" fill="none" stroke="#8a8a8a" stroke-width="1.1"/></svg>
<div class="t" style="left:30px;top:419.5px;height:16px;line-height:16px;color:#e8e8e8;">Strength Fades to Zero</div>
<div class="a f" style="left:177px;top:419.0px;width:16px;height:16px;"></div>
<svg class="a" style="left:177px;top:419.0px;" width="16" height="16" viewBox="0 0 16 16"><path d="M3 8.5L6.5 12L13 3.5" fill="none" stroke="#2fd06c" stroke-width="2"/></svg>
<svg class="a" style="left:14px;top:445.0px;" width="9" height="9" viewBox="0 0 9 9"><circle cx="4.5" cy="4.5" r="3.6" fill="none" stroke="#8a8a8a" stroke-width="1.1"/></svg>
<div class="t" style="left:30px;top:441.5px;height:16px;line-height:16px;color:#e8e8e8;">Type</div>
<div class="a dd" style="left:177px;top:441.0px;width:194px;height:16px;"></div>
<div class="t" style="left:180px;top:441.5px;height:16px;line-height:16px;color:#e8e8e8;">Sine</div>
<svg class="a" style="left:357px;top:446.5px;" width="10" height="6" viewBox="0 0 10 6"><path d="M1 1L5 5L9 1" fill="none" stroke="#ddd" stroke-width="1.2"/></svg>
<svg class="a" style="left:14px;top:467.0px;" width="9" height="9" viewBox="0 0 9 9"><circle cx="4.5" cy="4.5" r="3.6" fill="none" stroke="#8a8a8a" stroke-width="1.1"/></svg>
<div class="t" style="left:30px;top:463.5px;height:16px;line-height:16px;color:#e8e8e8;">Wave Style</div>
<div class="a dd" style="left:177px;top:463.0px;width:194px;height:16px;"></div>
<div class="t" style="left:180px;top:463.5px;height:16px;line-height:16px;color:#e8e8e8;">Normal</div>
<svg class="a" style="left:357px;top:468.5px;" width="10" height="6" viewBox="0 0 10 6"><path d="M1 1L5 5L9 1" fill="none" stroke="#ddd" stroke-width="1.2"/></svg>
<div class="t" style="left:30px;top:485.5px;height:16px;line-height:16px;color:#8a8a8a;">Graph</div>
<div class="a b" style="left:177px;top:485.0px;width:16px;height:16px;"></div>
<svg class="a" style="left:180px;top:488.5px;" width="10" height="10" viewBox="0 0 10 10"><path d="M1.5 0V8.5H10" fill="none" stroke="#ccc" stroke-width="1.1"/><path d="M0 10L9.5 2" stroke="#ccc" stroke-width="1.1"/></svg>
<div class="a" style="left:8px;top:506.5px;width:466px;height:1px;background:#262626;"></div>
<div class="a" style="left:9px;top:510px;width:463px;height:20px;background:#424242;border-radius:3px"></div>
<svg class="a" style="left:14px;top:515.5px;" width="9" height="9" viewBox="0 0 9 9"><circle cx="4.5" cy="4.5" r="3.6" fill="none" stroke="#8a8a8a" stroke-width="1.1"/><circle cx="4.5" cy="4.5" r="2" fill="#3fa9f0"/></svg>
<div class="t" style="left:30px;top:512.6px;height:16px;line-height:16px;color:#3fa9f0;">Minimum</div>
<div class="a f" style="left:177px;top:512px;width:94px;height:16px;"></div>
<div class="t" style="left:194px;top:512.6px;height:16px;line-height:16px;color:#9a9a9a;">-400.0</div>
<svg class="a" style="left:179px;top:516px;" width="10" height="10" viewBox="0 0 10 10"><circle cx="5" cy="4.5" r="4.3" fill="#3fa9f0"/></svg>
<svg class="a" style="left:248px;top:516px;" width="8" height="8" viewBox="0 0 8 8"><path d="M4 0.8L7.2 4L4 7.2L0.8 4Z" fill="none" stroke="#999" stroke-width="1"/></svg>
<div class="a" style="left:260px;top:512px;width:11px;height:16px;background:#363636;border-radius:0 3px 3px 0"></div>
<svg class="a" style="left:263px;top:516.8px;" width="6.5" height="7" viewBox="0 0 6.5 7"><path d="M0 0.3H3.6L6.5 3.5L3.6 6.7H0Z" fill="#b04fd0"/></svg>
<svg class="a" style="left:14px;top:538.1px;" width="9" height="9" viewBox="0 0 9 9"><circle cx="4.5" cy="4.5" r="3.6" fill="none" stroke="#8a8a8a" stroke-width="1.1"/></svg>
<div class="t" style="left:30px;top:534.6px;height:16px;line-height:16px;color:#e8e8e8;">Maximum</div>
<div class="a f" style="left:177px;top:534.1px;width:94px;height:16px;"></div>
<div class="t" style="left:180px;top:534.6px;height:16px;line-height:16px;color:#6a6a6a;">#</div>
<div class="t" style="left:194px;top:534.6px;height:16px;line-height:16px;color:#e0c060;">400.0</div>
<div class="a" style="left:154px;top:534.1px;width:15px;height:16px;background:#2a2a2a;border-radius:3px"></div>
<div class="t" style="left:157px;top:534.6px;height:16px;line-height:16px;color:#ddd;font-size:11px;">π</div>
<div class="a" style="left:260px;top:534.1px;width:11px;height:16px;background:#363636;border-radius:0 3px 3px 0"></div>
<svg class="a" style="left:251px;top:539.1px;" width="6.5" height="7" viewBox="0 0 6.5 7"><path d="M0 3.5L2.6 0.3H6.5V6.7H2.6Z" fill="#e0c060"/></svg>
<svg class="a" style="left:263px;top:539.1px;" width="6" height="7" viewBox="0 0 6 7"><path d="M0.3 0.3L6 3.5L0.3 6.7Z" fill="#888"/></svg>
<svg class="a" style="left:14px;top:560.1px;" width="9" height="9" viewBox="0 0 9 9"><circle cx="4.5" cy="4.5" r="3.6" fill="none" stroke="#8a8a8a" stroke-width="1.1"/></svg>
<div class="t" style="left:30px;top:556.6px;height:16px;line-height:16px;color:#e8e8e8;">Value Offset</div>
<div class="a f" style="left:177px;top:556.1px;width:94px;height:16px;"></div>
<div class="t" style="left:180px;top:556.6px;height:16px;line-height:16px;color:#6a6a6a;">#</div>
<div class="t" style="left:194px;top:556.6px;height:16px;line-height:16px;color:#e8e8e8;">0.0</div>
<svg class="a" style="left:14px;top:582.1px;" width="9" height="9" viewBox="0 0 9 9"><circle cx="4.5" cy="4.5" r="3.6" fill="none" stroke="#8a8a8a" stroke-width="1.1"/></svg>
<div class="t" style="left:30px;top:578.6px;height:16px;line-height:16px;color:#e8e8e8;">Stagger</div>
<div class="a f" style="left:177px;top:578.1px;width:94px;height:16px;"></div>
<div class="t" style="left:180px;top:578.6px;height:16px;line-height:16px;color:#6a6a6a;">#</div>
<div class="t" style="left:194px;top:578.6px;height:16px;line-height:16px;color:#e8e8e8;">0.0</div>
<svg class="a" style="left:14px;top:604.1px;" width="9" height="9" viewBox="0 0 9 9"><circle cx="4.5" cy="4.5" r="3.6" fill="none" stroke="#8a8a8a" stroke-width="1.1"/></svg>
<div class="t" style="left:30px;top:600.6px;height:16px;line-height:16px;color:#e8e8e8;">Separate Channels</div>
<div class="a f" style="left:177px;top:600.1px;width:16px;height:16px;"></div>
<div class="a" style="left:8px;top:621px;width:466px;height:1px;background:#262626;"></div>
<svg class="a" style="left:14px;top:631.1px;" width="9" height="9" viewBox="0 0 9 9"><circle cx="4.5" cy="4.5" r="3.6" fill="none" stroke="#8a8a8a" stroke-width="1.1"/></svg>
<div class="t" style="left:30px;top:627.6px;height:16px;line-height:16px;color:#e8e8e8;">Time Mode</div>
<div class="a dd" style="left:177px;top:627.1px;width:194px;height:16px;"></div>
<div class="t" style="left:180px;top:627.6px;height:16px;line-height:16px;color:#e8e8e8;">Minutes (BPM)</div>
<svg class="a" style="left:357px;top:632.6px;" width="10" height="6" viewBox="0 0 10 6"><path d="M1 1L5 5L9 1" fill="none" stroke="#ddd" stroke-width="1.2"/></svg>
<svg class="a" style="left:14px;top:653.1px;" width="9" height="9" viewBox="0 0 9 9"><circle cx="4.5" cy="4.5" r="3.6" fill="none" stroke="#8a8a8a" stroke-width="1.1"/></svg>
<div class="t" style="left:30px;top:649.6px;height:16px;line-height:16px;color:#e8e8e8;">Frequency</div>
<div class="a f" style="left:177px;top:649.1px;width:94px;height:16px;"></div>
<div class="t" style="left:180px;top:649.6px;height:16px;line-height:16px;color:#6a6a6a;">#</div>
<div class="t" style="left:194px;top:649.6px;height:16px;line-height:16px;color:#e8e8e8;">10.0</div>
<svg class="a" style="left:14px;top:675.1px;" width="9" height="9" viewBox="0 0 9 9"><circle cx="4.5" cy="4.5" r="3.6" fill="none" stroke="#8a8a8a" stroke-width="1.1"/></svg>
<div class="t" style="left:30px;top:671.6px;height:16px;line-height:16px;color:#e8e8e8;">Time</div>
<div class="a f" style="left:177px;top:671.1px;width:94px;height:16px;"></div>
<div class="t" style="left:180px;top:671.6px;height:16px;line-height:16px;color:#6a6a6a;">#</div>
<div class="t" style="left:194px;top:671.6px;height:16px;line-height:16px;color:#e0c060;">108.0</div>
<div class="a" style="left:260px;top:671.1px;width:11px;height:16px;background:#363636;border-radius:0 3px 3px 0"></div>
<svg class="a" style="left:251px;top:676.1px;" width="6.5" height="7" viewBox="0 0 6.5 7"><path d="M0 3.5L2.6 0.3H6.5V6.7H2.6Z" fill="#e0c060"/></svg>
<svg class="a" style="left:263px;top:676.1px;" width="6" height="7" viewBox="0 0 6 7"><path d="M0.3 0.3L6 3.5L0.3 6.7Z" fill="#888"/></svg>
<div class="a b" style="left:273px;top:671.5px;width:16px;height:16px;"></div>
<svg class="a" style="left:277px;top:675.5px;" width="8" height="8" viewBox="0 0 8 8"><path d="M0.5 0.5L7.5 7.5M7.5 0.5L0.5 7.5" stroke="#ccc" stroke-width="1.1"/></svg>
<svg class="a" style="left:14px;top:697.1px;" width="9" height="9" viewBox="0 0 9 9"><circle cx="4.5" cy="4.5" r="3.6" fill="none" stroke="#8a8a8a" stroke-width="1.1"/></svg>
<div class="t" style="left:30px;top:693.6px;height:16px;line-height:16px;color:#e8e8e8;">Time Offset</div>
<div class="a f" style="left:177px;top:693.1px;width:94px;height:16px;"></div>
<div class="t" style="left:180px;top:693.6px;height:16px;line-height:16px;color:#6a6a6a;">S</div>
<div class="t" style="left:194px;top:693.6px;height:16px;line-height:16px;color:#e8e8e8;">0.0</div>
<svg class="a" style="left:14px;top:719.1px;" width="9" height="9" viewBox="0 0 9 9"><circle cx="4.5" cy="4.5" r="3.6" fill="none" stroke="#8a8a8a" stroke-width="1.1"/></svg>
<div class="t" style="left:30px;top:715.6px;height:16px;line-height:16px;color:#e8e8e8;">Time Scale</div>
<div class="a f" style="left:177px;top:715.1px;width:94px;height:16px;"></div>
<div class="t" style="left:180px;top:715.6px;height:16px;line-height:16px;color:#6a6a6a;">#</div>
<div class="t" style="left:194px;top:715.6px;height:16px;line-height:16px;color:#e8e8e8;">1.0</div>
<div class="a" style="left:6px;top:738px;width:468px;height:23px;background:#2d2d2d;border-top:1.5px solid #c6ee5a;border-radius:3px 3px 0 0"></div>
<div class="a" style="left:6px;top:738px;width:3.5px;height:23px;background:#c6ee5a;border-radius:3px 0 0 0"></div>
<div class="a" style="left:470px;top:738px;width:4px;height:23px;background:#c6ee5a;border-radius:0 3px 0 0"></div>
<svg class="a" style="left:14px;top:747px;" width="10" height="6" viewBox="0 0 10 6"><path d="M1 1L5 5L9 1" fill="none" stroke="#bbb" stroke-width="1.2"/></svg>
<div class="a b" style="left:28px;top:741px;width:18px;height:18px;"></div>
<svg class="a" style="left:32px;top:745px;" width="11" height="11" viewBox="0 0 11 11"><circle cx="5" cy="5.5" r="4.3" fill="none" stroke="#ccc" stroke-width="1.1"/><path d="M3 5.5L5 7.5L10 1.5" fill="none" stroke="#ccc" stroke-width="1.2"/></svg>
<svg class="a" style="left:50px;top:745.5px;" width="9" height="9" viewBox="0 0 9 9"><circle cx="4.5" cy="4.5" r="3.6" fill="none" stroke="#8a8a8a" stroke-width="1.1"/></svg>
<svg class="a" style="left:64.5px;top:746px;" width="18" height="10" viewBox="0 0 18 10"><path d="M0 6.5C0.8 6.5 1.4 0.8 2.8 0.8C4.6 0.8 4.9 9.2 6.7 9.2C8.5 9.2 8.8 0.8 10.6 0.8C12.4 0.8 12.7 9.2 14.5 9.2C16 9.2 16.6 4 18 4" fill="none" stroke="#86d08f" stroke-width="1.2"/></svg>
<div class="t" style="left:87px;top:742.6px;height:16px;line-height:16px;color:#e8e8e8;">Oscillator [Position.X] Cosine</div>
<div class="a b" style="left:365px;top:741px;width:18px;height:18px;"></div>
<svg class="a" style="left:368px;top:745px;" width="13" height="11" viewBox="0 0 13 11"><rect x="0" y="0.8" width="5" height="2.2" fill="#ddd"/><rect x="0" y="6.6" width="5" height="2.2" fill="#ddd"/><path d="M5 1.9H6.2V7.7H5" fill="none" stroke="#ddd" stroke-width="1"/><path d="M7 4.8H12" stroke="#ddd" stroke-width="2"/><path d="M13.5 8.5v3h-3z" fill="#5fc7a0"/></svg>
<div class="a" style="left:386px;top:742px;width:21px;height:17px;background:#353535;border-radius:3px"></div>
<div class="a" style="left:396px;top:742px;width:1px;height:17px;background:#2d2d2d;"></div>
<svg class="a" style="left:388px;top:746.5px;" width="6.5" height="7" viewBox="0 0 6.5 7"><path d="M0 3.5L2.6 0.3H6.5V6.7H2.6Z" fill="#e0c060"/></svg>
<svg class="a" style="left:399px;top:746.5px;" width="6.5" height="7" viewBox="0 0 6.5 7"><path d="M0 0.3H3.6L6.5 3.5L3.6 6.7H0Z" fill="#c050e0"/></svg>
<div class="a b" style="left:410px;top:741px;width:18px;height:18px;"></div>
<svg class="a" style="left:414px;top:744px;" width="10" height="13" viewBox="0 0 10 13"><path d="M2.5 0h5v1.2l-1 0.8v3.5l2.5 2v1.2H1v-1.2l2.5-2V2L2.5 1.2Z" fill="#ddd"/><path d="M5 8.5V13" stroke="#ddd" stroke-width="1.1"/></svg>
<div class="a b" style="left:431px;top:741px;width:18px;height:18px;"></div>
<svg class="a" style="left:434px;top:744px;" width="13" height="13" viewBox="0 0 13 13"><g fill="#ddd"><circle cx="2" cy="2" r="1.1"/><circle cx="8" cy="2" r="1.1"/><circle cx="2" cy="8" r="1.1"/><path d="M8 5L9 8L12 9L9 10L8 13L7 10L4 9L7 8Z"/></g><path d="M13 10v3h-3z" fill="#5fc7a0"/></svg>
<div class="a b" style="left:451px;top:741px;width:18px;height:18px;"></div>
<svg class="a" style="left:456px;top:746px;" width="8" height="8" viewBox="0 0 8 8"><path d="M0.5 0.5L7.5 7.5M7.5 0.5L0.5 7.5" stroke="#ccc" stroke-width="1.1"/></svg>
<div class="a" style="left:184px;top:763px;width:96px;height:20px;background:#444;border-radius:4px 4px 0 0"></div>
<div class="t" style="left:205px;top:764.5px;height:16px;line-height:16px;color:#e8e8e8;">Behaviour</div>
<div class="t" style="left:302px;top:764.5px;height:16px;line-height:16px;color:#9a9a9a;">Deformer</div>
<div class="t" style="left:375px;top:764.5px;height:16px;line-height:16px;color:#9a9a9a;">|</div>
<div class="t" style="left:404px;top:764.5px;height:16px;line-height:16px;color:#9a9a9a;">Falloffs</div>
<div class="a" style="left:12px;top:787px;width:457px;height:76px;background:#1c1c1c;background-image:repeating-linear-gradient(90deg,#1c1c1c 0,#1c1c1c 8px,#2c2c2c 8px,#2c2c2c 10px);"></div>
<svg class="a" style="left:12px;top:787px;overflow:hidden" width="457" height="76" viewBox="0 0 457 76"><path d="M0 38H457" stroke="#3c62b2" stroke-width="2"/><polyline points="0.0,7.1 2.0,7.3 4.0,7.8 6.0,8.5 7.9,9.4 9.9,10.5 11.9,11.7 13.9,13.2 15.9,14.8 17.9,16.6 19.9,18.6 21.9,20.6 23.8,22.8 25.8,25.2 27.8,27.5 29.8,30.0 31.8,32.5 33.8,35.1 35.8,37.7 37.8,40.3 39.7,42.8 41.7,45.3 43.7,47.8 45.7,50.2 47.7,52.6 49.7,54.8 51.7,56.9 53.6,58.9 55.6,60.7 57.6,62.4 59.6,63.9 61.6,65.2 63.6,66.4 65.6,67.3 67.6,68.1 69.5,68.6 71.5,68.9 73.5,69.0 75.5,68.9 77.5,68.6 79.5,68.0 81.5,67.3 83.5,66.3 85.4,65.2 87.4,63.8 89.4,62.3 91.4,60.6 93.4,58.8 95.4,56.8 97.4,54.7 99.3,52.5 101.3,50.1 103.3,47.7 105.3,45.2 107.3,42.7 109.3,40.1 111.3,37.5 113.3,35.0 115.2,32.4 117.2,29.9 119.2,27.4 121.2,25.0 123.2,22.7 125.2,20.5 127.2,18.5 129.2,16.5 131.1,14.7 133.1,13.1 135.1,11.7 137.1,10.4 139.1,9.3 141.1,8.4 143.1,7.8 145.0,7.3 147.0,7.0 149.0,7.0 151.0,7.2 153.0,7.6 155.0,8.2 157.0,9.0 159.0,10.0 160.9,11.2 162.9,12.6 164.9,14.2 166.9,15.9 168.9,17.8 170.9,19.8 172.9,22.0 174.9,24.2 176.8,26.6 178.8,29.0 180.8,31.5 182.8,34.1 184.8,36.7 186.8,39.2 188.8,41.8 190.7,44.4 192.7,46.9 194.7,49.3 196.7,51.7 198.7,53.9 200.7,56.1 202.7,58.1 204.7,60.0 206.6,61.8 208.6,63.3 210.6,64.7 212.6,65.9 214.6,67.0 216.6,67.8 218.6,68.4 220.6,68.8 222.5,69.0 224.5,69.0 226.5,68.7 228.5,68.3 230.5,67.6 232.5,66.7 234.5,65.6 236.4,64.4 238.4,62.9 240.4,61.3 242.4,59.5 244.4,57.6 246.4,55.5 248.4,53.3 250.4,51.1 252.3,48.7 254.3,46.2 256.3,43.7 258.3,41.1 260.3,38.6 262.3,36.0 264.3,33.4 266.3,30.9 268.2,28.4 270.2,26.0 272.2,23.6 274.2,21.4 276.2,19.3 278.2,17.3 280.2,15.4 282.1,13.7 284.1,12.2 286.1,10.9 288.1,9.7 290.1,8.8 292.1,8.0 294.1,7.5 296.1,7.1 298.0,7.0 300.0,7.1 302.0,7.4 304.0,7.9 306.0,8.7 308.0,9.6 310.0,10.7 312.0,12.0 313.9,13.5 315.9,15.2 317.9,17.0 319.9,19.0 321.9,21.1 323.9,23.3 325.9,25.7 327.8,28.1 329.8,30.6 331.8,33.1 333.8,35.6 335.8,38.2 337.8,40.8 339.8,43.4 341.8,45.9 343.7,48.4 345.7,50.8 347.7,53.1 349.7,55.3 351.7,57.4 353.7,59.3 355.7,61.1 357.7,62.7 359.6,64.2 361.6,65.5 363.6,66.6 365.6,67.5 367.6,68.2 369.6,68.7 371.6,68.9 373.5,69.0 375.5,68.8 377.5,68.5 379.5,67.9 381.5,67.1 383.5,66.1 385.5,64.9 387.5,63.5 389.4,62.0 391.4,60.3 393.4,58.4 395.4,56.4 397.4,54.2 399.4,52.0 401.4,49.6 403.4,47.2 405.3,44.7 407.3,42.1 409.3,39.6 411.3,37.0 413.3,34.4 415.3,31.9 417.3,29.4 419.2,26.9 421.2,24.5 423.2,22.3 425.2,20.1 427.2,18.0 429.2,16.1 431.2,14.4 433.2,12.8 435.1,11.4 437.1,10.1 439.1,9.1 441.1,8.3 443.1,7.6 445.1,7.2 447.1,7.0 449.1,7.0 451.0,7.3 453.0,7.7 455.0,8.3 457.0,9.2" fill="none" stroke="#dcdcdc" stroke-width="1.05"/></svg>
<div class="a" style="left:11px;top:787px;width:2px;height:1px;background:#2fc86d;"></div>
<svg class="a" style="left:14px;top:874.0px;" width="9" height="9" viewBox="0 0 9 9"><circle cx="4.5" cy="4.5" r="3.6" fill="none" stroke="#8a8a8a" stroke-width="1.1"/></svg>
<div class="t" style="left:30px;top:870.5px;height:16px;line-height:16px;color:#e8e8e8;">Strength</div>
<div class="a f" style="left:177px;top:870.0px;width:94px;height:16px;"></div>
<div class="t" style="left:180px;top:870.5px;height:16px;line-height:16px;color:#6a6a6a;">%</div>
<div class="t" style="left:194px;top:870.5px;height:16px;line-height:16px;color:#e8e8e8;">100.0</div>
<svg class="a" style="left:14px;top:896.0px;" width="9" height="9" viewBox="0 0 9 9"><circle cx="4.5" cy="4.5" r="3.6" fill="none" stroke="#8a8a8a" stroke-width="1.1"/></svg>
<div class="t" style="left:30px;top:892.5px;height:16px;line-height:16px;color:#e8e8e8;">Strength Fades to Zero</div>
<div class="a f" style="left:177px;top:892.0px;width:16px;height:16px;"></div>
<svg class="a" style="left:177px;top:892.0px;" width="16" height="16" viewBox="0 0 16 16"><path d="M3 8.5L6.5 12L13 3.5" fill="none" stroke="#2fd06c" stroke-width="2"/></svg>
<svg class="a" style="left:14px;top:918.0px;" width="9" height="9" viewBox="0 0 9 9"><circle cx="4.5" cy="4.5" r="3.6" fill="none" stroke="#8a8a8a" stroke-width="1.1"/></svg>
<div class="t" style="left:30px;top:914.5px;height:16px;line-height:16px;color:#e8e8e8;">Type</div>
<div class="a dd" style="left:177px;top:914.0px;width:194px;height:16px;"></div>
<div class="t" style="left:180px;top:914.5px;height:16px;line-height:16px;color:#e8e8e8;">Cosine</div>
<svg class="a" style="left:357px;top:919.5px;" width="10" height="6" viewBox="0 0 10 6"><path d="M1 1L5 5L9 1" fill="none" stroke="#ddd" stroke-width="1.2"/></svg>
<svg class="a" style="left:14px;top:940.0px;" width="9" height="9" viewBox="0 0 9 9"><circle cx="4.5" cy="4.5" r="3.6" fill="none" stroke="#8a8a8a" stroke-width="1.1"/></svg>
<div class="t" style="left:30px;top:936.5px;height:16px;line-height:16px;color:#e8e8e8;">Wave Style</div>
<div class="a dd" style="left:177px;top:936.0px;width:194px;height:16px;"></div>
<div class="t" style="left:180px;top:936.5px;height:16px;line-height:16px;color:#e8e8e8;">Normal</div>
<svg class="a" style="left:357px;top:941.5px;" width="10" height="6" viewBox="0 0 10 6"><path d="M1 1L5 5L9 1" fill="none" stroke="#ddd" stroke-width="1.2"/></svg>
<div class="t" style="left:30px;top:958.5px;height:16px;line-height:16px;color:#8a8a8a;">Graph</div>
<div class="a b" style="left:177px;top:958.0px;width:16px;height:16px;"></div>
<svg class="a" style="left:180px;top:961.5px;" width="10" height="10" viewBox="0 0 10 10"><path d="M1.5 0V8.5H10" fill="none" stroke="#ccc" stroke-width="1.1"/><path d="M0 10L9.5 2" stroke="#ccc" stroke-width="1.1"/></svg>
<div class="a" style="left:8px;top:979.5px;width:466px;height:1px;background:#262626;"></div>
<svg class="a" style="left:14px;top:989.1px;" width="9" height="9" viewBox="0 0 9 9"><circle cx="4.5" cy="4.5" r="3.6" fill="none" stroke="#8a8a8a" stroke-width="1.1"/></svg>
<div class="t" style="left:30px;top:985.6px;height:16px;line-height:16px;color:#e8e8e8;">Minimum</div>
<div class="a f" style="left:177px;top:985.1px;width:94px;height:16px;"></div>
<div class="t" style="left:180px;top:985.6px;height:16px;line-height:16px;color:#6a6a6a;">#</div>
<div class="t" style="left:194px;top:985.6px;height:16px;line-height:16px;color:#e8e8e8;">-400.0</div>
<div class="a" style="left:260px;top:985.1px;width:11px;height:16px;background:#363636;border-radius:0 3px 3px 0"></div>
<svg class="a" style="left:263px;top:990.2px;" width="6.5" height="7" viewBox="0 0 6.5 7"><path d="M0 0.3H3.6L6.5 3.5L3.6 6.7H0Z" fill="#c050e0"/></svg>
<svg class="a" style="left:14px;top:1011.1px;" width="9" height="9" viewBox="0 0 9 9"><circle cx="4.5" cy="4.5" r="3.6" fill="none" stroke="#8a8a8a" stroke-width="1.1"/></svg>
<div class="t" style="left:30px;top:1007.6px;height:16px;line-height:16px;color:#e8e8e8;">Maximum</div>
<div class="a f" style="left:177px;top:1007.1px;width:94px;height:16px;"></div>
<div class="t" style="left:180px;top:1007.6px;height:16px;line-height:16px;color:#6a6a6a;">#</div>
<div class="t" style="left:194px;top:1007.6px;height:16px;line-height:16px;color:#e0c060;">400.0</div>
<div class="a" style="left:154px;top:1007.1px;width:15px;height:16px;background:#2a2a2a;border-radius:3px"></div>
<div class="t" style="left:157px;top:1007.6px;height:16px;line-height:16px;color:#ddd;font-size:11px;">π</div>
<div class="a" style="left:260px;top:1007.1px;width:11px;height:16px;background:#363636;border-radius:0 3px 3px 0"></div>
<svg class="a" style="left:251px;top:1012.1px;" width="6.5" height="7" viewBox="0 0 6.5 7"><path d="M0 3.5L2.6 0.3H6.5V6.7H2.6Z" fill="#e0c060"/></svg>
<svg class="a" style="left:263px;top:1012.1px;" width="6" height="7" viewBox="0 0 6 7"><path d="M0.3 0.3L6 3.5L0.3 6.7Z" fill="#888"/></svg>
<div class="a" style="left:0px;top:1024px;width:492px;height:7px;background:#1c1c1c;"></div>
<div class="a" style="left:494px;top:85px;width:30px;height:496px;background:#444;"></div>
<div class="a" style="left:502px;top:89.3px;width:2px;height:2px;background:#888;"></div>
<div class="a" style="left:508px;top:89.3px;width:2px;height:2px;background:#888;"></div>
<div class="a" style="left:514px;top:89.3px;width:2px;height:2px;background:#888;"></div>
<div class="a" style="left:495px;top:96px;width:28px;height:28px;background:#272727;border-radius:4px"></div>
<svg class="a" style="left:503px;top:99.3px;" width="16" height="20" viewBox="0 0 16 20"><path d="M1.5 1.5L12.5 11.8L8 12.2L10.6 17.3L8.4 18.4L5.8 13.2L1.5 16.5Z" fill="none" stroke="#2fc86d" stroke-width="1.3" stroke-linejoin="miter"/></svg>
<svg class="a" style="left:503px;top:130px;" width="15" height="20" viewBox="0 0 15 20"><path d="M0.3 0.3L14.8 11.8L5.8 12.6L0.3 19.5Z" fill="#e2e2e2"/></svg>
<svg class="a" style="left:501px;top:161px;" width="17" height="17" viewBox="0 0 17 17"><g transform="rotate(-40 8.5 8.5) translate(8.5 7) scale(1.28) translate(-8.5 -7)"><path d="M8.5 -1L12.6 7.5L10.5 11.5H6.5L4.4 7.5Z" fill="#e2e2e2"/><path d="M8.5 -1V6" stroke="#444" stroke-width="1"/><circle cx="8.5" cy="7" r="1.3" fill="#444"/><rect x="6" y="12.3" width="5" height="2.6" fill="#ccc"/></g></svg>
<svg class="a" style="left:500px;top:190px;" width="18" height="18" viewBox="0 0 18 18"><path d="M3 12.8L12.8 3L15 5.2L5.2 15Z" fill="#e2e2e2"/><path d="M13.6 2.2L14.6 1.2A1.4 1.4 0 0 1 16.6 1.2L16.8 1.4A1.4 1.4 0 0 1 16.8 3.4L15.8 4.4Z" fill="#e2e2e2"/><path d="M2.4 13.8L4.2 15.6L1 17Z" fill="#ccc"/></svg>
<svg class="a" style="left:499px;top:223px;" width="21" height="14" viewBox="0 0 21 14"><rect x="0" y="2.5" width="13" height="11" rx="1.5" fill="#e2e2e2"/><path d="M14 7L20.5 3V13L14 9.5Z" fill="#e2e2e2"/><rect x="2.5" y="0" width="7" height="1.8" fill="#e2e2e2"/><circle cx="3.3" cy="6" r="1.3" fill="#444"/></svg>
<svg class="a" style="left:500px;top:251px;" width="18" height="18" viewBox="0 0 18 18"><path d="M1 17L17 1" stroke="#cfcfcf" stroke-width="1.3"/></svg>
<svg class="a" style="left:501px;top:282px;" width="16" height="16" viewBox="0 0 16 16"><path d="M0.5 0.5H15.5V3.8H10V15.5H6V3.8H0.5Z" fill="#e2e2e2"/></svg>
<svg class="a" style="left:499px;top:311px;" width="19" height="19" viewBox="0 0 19 19"><path d="M1 0.5L11 6L5 7.5L1.5 13Z" fill="#e2e2e2"/><path d="M12 1.5L16 1L17.5 17.5L1.5 17.5L3 14" fill="none" stroke="#ccc" stroke-width="1.2" stroke-dasharray="3 2"/><rect x="15.5" y="0" width="2.5" height="2.5" fill="#e2e2e2"/><rect x="16" y="16" width="2.5" height="2.5" fill="#e2e2e2"/><rect x="0" y="16" width="2.5" height="2.5" fill="#e2e2e2"/></svg>
<div class="a" style="left:502px;top:343px;width:14px;height:14px;background:#e2e2e2;"></div>
<div class="a" style="left:501px;top:372px;width:16px;height:16px;background:#e2e2e2;border-radius:50%"></div>
<svg class="a" style="left:500px;top:400px;" width="18" height="17" viewBox="0 0 18 17"><path d="M9 0.5L17.5 6.5L14.3 16.5H3.7L0.5 6.5Z" fill="#e2e2e2" stroke="#e2e2e2" stroke-linejoin="round"/></svg>
<svg class="a" style="left:500px;top:430px;" width="18" height="18" viewBox="0 0 18 18"><path d="M9 0.5L11.3 6.6L17.8 6.9L12.7 10.9L14.5 17.2L9 13.6L3.5 17.2L5.3 10.9L0.2 6.9L6.7 6.6Z" fill="#e2e2e2"/></svg>
<svg class="a" style="left:501px;top:461px;" width="17" height="17" viewBox="0 0 17 17"><path d="M2.4 9.2A6.1 6.1 0 1 1 8.3 15" fill="none" stroke="#e2e2e2" stroke-width="3.6"/></svg>
<svg class="a" style="left:500px;top:490px;" width="18" height="18" viewBox="0 0 18 18"><path d="M9 0C9.8 5.5 12.5 8.2 18 9C12.5 9.8 9.8 12.5 9 18C8.2 12.5 5.5 9.8 0 9C5.5 8.2 8.2 5.5 9 0Z" fill="#e2e2e2"/></svg>
<svg class="a" style="left:500px;top:520px;" width="18" height="18" viewBox="0 0 18 18"><g transform="translate(9 9)"><g fill="#e2e2e2"><rect x="-1.9" y="-9" width="3.8" height="5" rx="0.8" transform="rotate(0)"/><rect x="-1.9" y="-9" width="3.8" height="5" rx="0.8" transform="rotate(45)"/><rect x="-1.9" y="-9" width="3.8" height="5" rx="0.8" transform="rotate(90)"/><rect x="-1.9" y="-9" width="3.8" height="5" rx="0.8" transform="rotate(135)"/><rect x="-1.9" y="-9" width="3.8" height="5" rx="0.8" transform="rotate(180)"/><rect x="-1.9" y="-9" width="3.8" height="5" rx="0.8" transform="rotate(225)"/><rect x="-1.9" y="-9" width="3.8" height="5" rx="0.8" transform="rotate(270)"/><rect x="-1.9" y="-9" width="3.8" height="5" rx="0.8" transform="rotate(315)"/></g><circle r="5.2" fill="none" stroke="#e2e2e2" stroke-width="3.4"/></g></svg>
<svg class="a" style="left:503px;top:564px;" width="14" height="12" viewBox="0 0 14 12"><path d="M1 1L6 6L1 11M8 1L13 6L8 11" fill="none" stroke="#aaa" stroke-width="1.2"/></svg>
<div class="a" style="left:530px;top:85px;width:87px;height:22px;background:#444;border-radius:4px 4px 0 0"></div>
<div class="t" style="left:535px;top:88.5px;height:16px;line-height:16px;color:#e8e8e8;">Composition 2</div>
<div class="a" style="left:530px;top:107px;width:1057px;height:451px;background:#000;"></div>
<div class="a" style="left:694px;top:127px;width:728px;height:410px;background:#00aeff;"></div>
<div class="a" style="left:1157px;top:240px;width:90px;height:90px;background:#3ce38e;border-radius:50%"></div>
<div class="t" style="left:569.5px;top:460.3px;height:14px;line-height:14px;font-size:11.6px;"><span style="color:#f4f4f4">Hold S</span><span class="hd">Direct Layer Selection</span></div>
<div class="t" style="left:569.5px;top:474.3px;height:14px;line-height:14px;font-size:11.6px;"><span style="color:#f4f4f4">Space</span><span class="hd">Play/ Stop</span></div>
<div class="t" style="left:569.5px;top:488.3px;height:14px;line-height:14px;font-size:11.6px;"><span style="color:#f4f4f4">Space + click + drag</span><span class="hd">Pan</span></div>
<div class="t" style="left:569.5px;top:502.3px;height:14px;line-height:14px;font-size:11.6px;"><span style="color:#f4f4f4">Alt + click + drag</span><span class="hd">Move Pivot Point</span></div>
<div class="t" style="left:569.5px;top:516.3px;height:14px;line-height:14px;font-size:11.6px;"><span style="color:#f4f4f4">Shift</span><span class="hd">Enable Snapping</span></div>
<div class="t" style="left:998px;top:535.5px;height:16px;line-height:16px;color:#f2f2f2;">Viewport Quality: High</div>
<div class="a" style="left:530px;top:558px;width:1057px;height:22px;background:#444;"></div>
<div class="a f" style="left:535px;top:561px;width:78px;height:16px;"></div>
<div class="t" style="left:539px;top:561px;height:16px;line-height:16px;color:#e8e8e8;">38%</div>
<svg class="a" style="left:598px;top:566px;" width="10" height="6" viewBox="0 0 10 6"><path d="M1 1L5 5L9 1" fill="none" stroke="#ddd" stroke-width="1.2"/></svg>
<div class="a" style="left:866px;top:559.5px;width:100px;height:19px;background:#2d2d2d;border-radius:4px;border:1px solid #222"></div>
<svg class="a" style="left:870px;top:563.5px;" width="11" height="11" viewBox="0 0 11 11"><path d="M1 0.5V10.5" stroke="#cdcdcd" stroke-width="1.6"/><path d="M11 0.5V10.5L3 5.5Z" fill="#cdcdcd"/></svg>
<svg class="a" style="left:890px;top:563.5px;" width="11" height="11" viewBox="0 0 11 11"><path d="M8 0.5V10.5L0.5 5.5Z" fill="#cdcdcd"/><path d="M10.2 0.5V10.5" stroke="#cdcdcd" stroke-width="1.6"/></svg>
<div class="a" style="left:886px;top:561px;width:1px;height:16px;background:#222;"></div>
<svg class="a" style="left:910px;top:563.5px;" width="11" height="11" viewBox="0 0 11 11"><path d="M1.5 0.5V10.5L10 5.5Z" fill="#cdcdcd"/></svg>
<div class="a" style="left:906px;top:561px;width:1px;height:16px;background:#222;"></div>
<svg class="a" style="left:930px;top:563.5px;" width="11" height="11" viewBox="0 0 11 11"><path d="M1 0.5V10.5" stroke="#cdcdcd" stroke-width="1.6"/><path d="M3.2 0.5V10.5L10.7 5.5Z" fill="#cdcdcd"/></svg>
<div class="a" style="left:926px;top:561px;width:1px;height:16px;background:#222;"></div>
<svg class="a" style="left:950px;top:563.5px;" width="11" height="11" viewBox="0 0 11 11"><path d="M0.5 0.5V10.5L8.5 5.5Z" fill="#cdcdcd"/><path d="M10.5 0.5V10.5" stroke="#cdcdcd" stroke-width="1.6"/></svg>
<div class="a" style="left:946px;top:561px;width:1px;height:16px;background:#222;"></div>
<div class="a b" style="left:971.5px;top:559.5px;width:19.5px;height:19px;"></div>
<svg class="a" style="left:975px;top:562.5px;" width="13" height="12" viewBox="0 0 13 12"><path d="M6 3.5H1.8A1 1 0 0 0 0.8 4.5V10A1 1 0 0 0 1.8 11H11.2A1 1 0 0 0 12.2 10V5.5" fill="none" stroke="#cdcdcd" stroke-width="1.3"/><path d="M7 0L12 3.2L7 6.4Z" fill="#cdcdcd"/></svg>
<div class="a" style="left:1232px;top:560px;width:37px;height:18px;background:#2d2d2d;border-radius:3px"></div>
<svg class="a" style="left:1234px;top:565px;" width="13" height="8" viewBox="0 0 13 8"><path d="M0 4L3.5 0H13V8H3.5Z" fill="#e2e2e2"/><circle cx="4" cy="4" r="1.3" fill="#2d2d2d"/></svg>
<div class="t" style="left:1257px;top:561.5px;height:16px;line-height:16px;color:#8a8a8a;">0</div>
<div class="a" style="left:1272px;top:560px;width:31px;height:18px;background:#2d2d2d;border-radius:4px;border:1px solid #222"></div>
<div class="a" style="left:1291px;top:561px;width:1px;height:16px;background:#222;"></div>
<svg class="a" style="left:1294px;top:565.5px;" width="6" height="7" viewBox="0 0 6 7"><path d="M0.6 0.6L5.4 3.5L0.6 6.4Z" fill="none" stroke="#8a8a8a" stroke-width="1"/></svg>
<svg class="a" style="left:1276px;top:563px;" width="14" height="12" viewBox="0 0 14 12"><path d="M0 4H3L7 0.5V11.5L3 8H0Z" fill="#2fc86d"/><path d="M9 3.2A3.5 3.5 0 0 1 9 8.8M10.8 1A6 6 0 0 1 10.8 11" fill="none" stroke="#2fc86d" stroke-width="1.3"/></svg>
<div class="a" style="left:1308px;top:560px;width:31px;height:18px;background:#2d2d2d;border-radius:4px;border:1px solid #222"></div>
<div class="a" style="left:1309px;top:561px;width:18px;height:16px;background:#4a4a4a;border-radius:3px 0 0 3px"></div>
<div class="a" style="left:1327px;top:561px;width:1px;height:16px;background:#222;"></div>
<svg class="a" style="left:1330px;top:565.5px;" width="6" height="7" viewBox="0 0 6 7"><path d="M0.6 0.6L5.4 3.5L0.6 6.4Z" fill="none" stroke="#8a8a8a" stroke-width="1"/></svg>
<svg class="a" style="left:1311px;top:562.5px;" width="13" height="13" viewBox="0 0 13 13"><g transform="rotate(45 6.5 6.5)"><path d="M3 11V6A3.5 3.5 0 0 1 10 6V11" fill="none" stroke="#e2e2e2" stroke-width="2.2"/></g></svg>
<div class="a" style="left:1343px;top:560px;width:31px;height:18px;background:#2d2d2d;border-radius:4px;border:1px solid #222"></div>
<div class="a" style="left:1344px;top:561px;width:18px;height:16px;background:#4a4a4a;border-radius:3px 0 0 3px"></div>
<div class="a" style="left:1362px;top:561px;width:1px;height:16px;background:#222;"></div>
<svg class="a" style="left:1365px;top:565.5px;" width="6" height="7" viewBox="0 0 6 7"><path d="M0.6 0.6L5.4 3.5L0.6 6.4Z" fill="none" stroke="#8a8a8a" stroke-width="1"/></svg>
<svg class="a" style="left:1346px;top:563px;" width="13" height="13" viewBox="0 0 13 13"><path d="M4 0V13M9 0V13M0 4H13M0 9H13" stroke="#e2e2e2" stroke-width="1.2"/></svg>
<div class="a b" style="left:1378px;top:560px;width:19px;height:18px;"></div>
<svg class="a" style="left:1381px;top:563.5px;" width="14" height="11" viewBox="0 0 14 11"><g fill="#2fc86d"><rect x="0" y="0" width="3.4" height="4.5"/><rect x="0" y="6" width="3.4" height="5"/><rect x="5" y="7.5" width="9" height="3.5"/></g><rect x="5.7" y="0.7" width="7.6" height="4.6" fill="none" stroke="#2fc86d" stroke-width="1.4"/></svg>
<div class="a b" style="left:1401px;top:560px;width:19px;height:18px;"></div>
<svg class="a" style="left:1404px;top:564px;" width="14" height="10" viewBox="0 0 14 10"><g fill="none" stroke="#d0d0d0" stroke-width="1.6"><path d="M0.8 0.5L4.5 5L0.8 9.5"/><path d="M5.3 0.5L9 5L5.3 9.5"/><path d="M9.8 0.5L13.5 5L9.8 9.5"/></g></svg>
<div class="a" style="left:1424px;top:560px;width:31px;height:18px;background:#2d2d2d;border-radius:4px;border:1px solid #222"></div>
<div class="a" style="left:1443px;top:561px;width:1px;height:16px;background:#222;"></div>
<svg class="a" style="left:1446px;top:565.5px;" width="6" height="7" viewBox="0 0 6 7"><path d="M0.6 0.6L5.4 3.5L0.6 6.4Z" fill="none" stroke="#8a8a8a" stroke-width="1"/></svg>
<svg class="a" style="left:1427px;top:563.5px;" width="14" height="11" viewBox="0 0 14 11"><rect x="0.7" y="0.7" width="12.6" height="9.6" fill="#333" stroke="#e2e2e2" stroke-width="1.3"/><rect x="0" y="8.5" width="14" height="2.5" fill="#e2e2e2"/></svg>
<div class="a" style="left:1459px;top:560px;width:31px;height:18px;background:#2d2d2d;border-radius:4px;border:1px solid #222"></div>
<div class="a" style="left:1478px;top:561px;width:1px;height:16px;background:#222;"></div>
<svg class="a" style="left:1481px;top:565.5px;" width="6" height="7" viewBox="0 0 6 7"><path d="M0.6 0.6L5.4 3.5L0.6 6.4Z" fill="none" stroke="#8a8a8a" stroke-width="1"/></svg>
<svg class="a" style="left:1462px;top:563px;" width="14" height="12" viewBox="0 0 14 12"><g fill="none" stroke="#9a9a9a" stroke-width="1.1"><rect x="0.5" y="0.5" width="8" height="5.5"/><path d="M3 8.5H11.5V3M6 11.5H13.5V6"/></g></svg>
<div class="a" style="left:1493px;top:560px;width:31px;height:18px;background:#2d2d2d;border-radius:4px;border:1px solid #222"></div>
<div class="a" style="left:1512px;top:561px;width:1px;height:16px;background:#222;"></div>
<svg class="a" style="left:1515px;top:565.5px;" width="6" height="7" viewBox="0 0 6 7"><path d="M0.6 0.6L5.4 3.5L0.6 6.4Z" fill="none" stroke="#8a8a8a" stroke-width="1"/></svg>
<svg class="a" style="left:1496px;top:562.5px;" width="14" height="14" viewBox="0 0 14 14"><rect x="0" y="0" width="9" height="9" fill="#aaa"/><rect x="5" y="5" width="8.5" height="8.5" fill="#333" stroke="#e2e2e2" stroke-width="1.2"/></svg>
<div class="a" style="left:1528px;top:560px;width:31px;height:18px;background:#2d2d2d;border-radius:4px;border:1px solid #222"></div>
<div class="a" style="left:1547px;top:561px;width:1px;height:16px;background:#222;"></div>
<svg class="a" style="left:1550px;top:565.5px;" width="6" height="7" viewBox="0 0 6 7"><path d="M0.6 0.6L5.4 3.5L0.6 6.4Z" fill="none" stroke="#8a8a8a" stroke-width="1"/></svg>
<svg class="a" style="left:1532px;top:564px;" width="12" height="12" viewBox="0 0 12 12"><g fill="#2fc86d"><rect x="0" y="0" width="3" height="3"/><rect x="6" y="0" width="3" height="3"/><rect x="3" y="3" width="3" height="3"/><rect x="9" y="3" width="3" height="3"/><rect x="0" y="6" width="3" height="3"/><rect x="6" y="6" width="3" height="3"/><rect x="3" y="9" width="3" height="3"/><rect x="9" y="9" width="3" height="3"/></g></svg>
<div class="a b" style="left:1564px;top:560px;width:19px;height:18px;"></div>
<svg class="a" style="left:1567px;top:562.5px;" width="13" height="13" viewBox="0 0 18 18"><g transform="translate(9 9)"><g fill="#e2e2e2"><rect x="-1.9" y="-9" width="3.8" height="5" rx="0.8" transform="rotate(0)"/><rect x="-1.9" y="-9" width="3.8" height="5" rx="0.8" transform="rotate(45)"/><rect x="-1.9" y="-9" width="3.8" height="5" rx="0.8" transform="rotate(90)"/><rect x="-1.9" y="-9" width="3.8" height="5" rx="0.8" transform="rotate(135)"/><rect x="-1.9" y="-9" width="3.8" height="5" rx="0.8" transform="rotate(180)"/><rect x="-1.9" y="-9" width="3.8" height="5" rx="0.8" transform="rotate(225)"/><rect x="-1.9" y="-9" width="3.8" height="5" rx="0.8" transform="rotate(270)"/><rect x="-1.9" y="-9" width="3.8" height="5" rx="0.8" transform="rotate(315)"/></g><circle r="5.2" fill="none" stroke="#e2e2e2" stroke-width="3.4"/></g></svg>
<div class="a" style="left:1593px;top:85px;width:39px;height:22px;background:#444;border-radius:4px 4px 0 0"></div>
<div class="t" style="left:1598px;top:88.5px;height:16px;line-height:16px;color:#e8e8e8;">Color</div>
<div class="a" style="left:1633px;top:85px;width:71px;height:22px;background:#262626;border-radius:4px 4px 0 0"></div>
<div class="t" style="left:1639px;top:88.5px;height:16px;line-height:16px;color:#e8e8e8;">Add Layers</div>
<div class="a" style="left:1593px;top:107px;width:321px;height:377px;background:#444;"></div>
<div class="a" style="left:1900px;top:107px;width:1px;height:378px;background:#3a3a3a;"></div>
<div class="a" style="left:1902px;top:111px;width:9px;height:297px;background:#565656;border-radius:5px"></div>
<div class="a" style="left:1646px;top:120px;width:200px;height:200px;border-radius:50%;background:conic-gradient(from 90deg,#f00 0deg,#f0f 50deg,#00f 119.5deg,#0ff 176deg,#0f0 239.5deg,#ff0 309.5deg,#f00 360deg);-webkit-mask:radial-gradient(circle,transparent 74.5px,#000 75.5px,#000 99.5px,transparent 100.5px);mask:radial-gradient(circle,transparent 74.5px,#000 75.5px,#000 99.5px,transparent 100.5px)"></div>
<div class="a" style="left:1702px;top:176px;width:90px;height:90px;background:linear-gradient(to right,#000,rgba(0,0,0,0)),linear-gradient(to bottom,#fff,#00ff80)"></div>
<svg class="a" style="left:1664px;top:169px;" width="14" height="14" viewBox="0 0 14 14"><circle cx="7" cy="7" r="5.8" fill="none" stroke="#eee" stroke-width="1"/></svg>
<svg class="a" style="left:1774px;top:235px;" width="14" height="14" viewBox="0 0 14 14"><circle cx="7" cy="7" r="5.8" fill="none" stroke="#eee" stroke-width="1"/></svg>
<div class="a" style="left:1600px;top:333px;width:22px;height:22px;background:#3ce38e;border-radius:3px"></div>
<div class="a b" style="left:1871px;top:333px;width:22px;height:22px;"></div>
<svg class="a" style="left:1875px;top:337px;" width="14" height="14" viewBox="0 0 14 14"><g transform="rotate(45 7 7)"><rect x="5.2" y="-1" width="3.6" height="4" rx="1.2" fill="#ddd"/><rect x="4" y="3" width="6" height="2" fill="#ddd"/><path d="M5.5 5h3v6L7 14L5.5 11Z" fill="none" stroke="#bbb" stroke-width="1"/></g></svg>
<div class="a dd" style="left:1600px;top:360px;width:50px;height:18px;background:#444;border-color:#5a5a5a"></div>
<div class="t" style="left:1603px;top:361.5px;height:16px;line-height:16px;color:#e8e8e8;">Hex</div>
<svg class="a" style="left:1636px;top:367px;" width="10" height="6" viewBox="0 0 10 6"><path d="M1 1L5 5L9 1" fill="none" stroke="#ddd" stroke-width="1.2"/></svg>
<div class="a f" style="left:1653px;top:358px;width:241px;height:22px;"></div>
<div class="t" style="left:1658px;top:361.5px;height:16px;line-height:16px;color:#555;">#</div>
<div class="t" style="left:1670px;top:361.5px;height:16px;line-height:16px;color:#e8e8e8;">3ce38e</div>
<div class="a" style="left:1600px;top:390px;width:236px;height:4px;background:#ddd;border-radius:2px"></div>
<svg class="a" style="left:1829px;top:387px;" width="10" height="10" viewBox="0 0 10 10"><circle cx="5" cy="5" r="5" fill="#6fd0b0"/><circle cx="5" cy="5" r="2.2" fill="#4a9a84"/></svg>
<div class="a f" style="left:1849px;top:384px;width:45px;height:16px;"></div>
<div class="t" style="left:1853px;top:384.5px;height:16px;line-height:16px;color:#555;">A</div>
<div class="t" style="left:1866px;top:384.5px;height:16px;line-height:16px;color:#e8e8e8;">255</div>
<div class="a" style="left:1597px;top:406px;width:300px;height:24px;background:#262626;"></div>
<div class="a" style="left:1599px;top:408px;width:149px;height:20px;background:#444;border-radius:4px 4px 0 0"></div>
<div class="t" style="left:1648px;top:410px;height:16px;line-height:16px;color:#e8e8e8;">Swatches</div>
<div class="a" style="left:1748px;top:408px;width:147px;height:20px;background:#2d2d2d;border-radius:4px 4px 0 0"></div>
<div class="t" style="left:1794px;top:410px;height:16px;line-height:16px;color:#aaa;">Generator</div>
<div class="a" style="left:1598px;top:432px;width:256px;height:17px;background:#5a5a5a;border-radius:4px"></div>
<div class="a" style="left:1599px;top:432px;width:63px;height:17px;background:#262626;border-radius:4px;border:1px solid #5a5a5a"></div>
<svg class="a" style="left:1606px;top:436px;" width="9" height="9" viewBox="0 0 9 9"><path d="M1 0V9M4 0V9" stroke="#2fc86d" stroke-width="1.6"/><path d="M6 0.5L8.5 9" stroke="#2fc86d" stroke-width="1.4"/></svg>
<div class="t" style="left:1621px;top:433px;height:16px;line-height:16px;color:#e8e8e8;">Library</div>
<svg class="a" style="left:1670px;top:436px;" width="11" height="9" viewBox="0 0 11 9"><rect x="0.5" y="1.5" width="10" height="7" fill="none" stroke="#ddd"/><path d="M0.5 0.5h5M2.5 4h6M2.5 6.3h6" stroke="#ddd"/></svg>
<div class="t" style="left:1686px;top:433px;height:16px;line-height:16px;color:#e8e8e8;">Project</div>
<svg class="a" style="left:1738px;top:436px;" width="8" height="10" viewBox="0 0 8 10"><path d="M0.5 0.5H5L7.5 3V9.5H0.5Z" fill="none" stroke="#ddd"/></svg>
<div class="t" style="left:1752px;top:433px;height:16px;line-height:16px;color:#e8e8e8;">Scene</div>
<svg class="a" style="left:1800px;top:436px;" width="10" height="10" viewBox="0 0 10 10"><path d="M1 3.5A2.5 2.5 0 0 1 3.5 1H9V6L6 9.5H3.5A2.5 2.5 0 0 1 1 7Z" fill="none" stroke="#ddd"/><path d="M9 6H6V9.5" fill="none" stroke="#ddd"/></svg>
<div class="t" style="left:1816px;top:433px;height:16px;line-height:16px;color:#e8e8e8;">Labels</div>
<div class="a" style="left:1858px;top:432px;width:37px;height:17px;background:#5a5a5a;border-radius:4px"></div>
<div class="a" style="left:1859px;top:433px;width:17px;height:15px;background:#262626;border-radius:3px"></div>
<svg class="a" style="left:1863px;top:436px;" width="9" height="9" viewBox="0 0 9 9"><g fill="#2fc86d"><rect x="0" y="0" width="3.5" height="3.5"/><rect x="5.5" y="0" width="3.5" height="3.5"/><rect x="0" y="5.5" width="3.5" height="3.5"/><rect x="5.5" y="5.5" width="3.5" height="3.5"/></g></svg>
<svg class="a" style="left:1881px;top:436px;" width="10" height="9" viewBox="0 0 10 9"><path d="M0 1H10M0 4.5H10M0 8H10" stroke="#ddd" stroke-width="1.1"/></svg>
<div class="a dd" style="left:1598px;top:453px;width:276px;height:17px;"></div>
<div class="t" style="left:1601px;top:453.5px;height:16px;line-height:16px;color:#e8e8e8;">Alice</div>
<svg class="a" style="left:1860px;top:459px;" width="10" height="6" viewBox="0 0 10 6"><path d="M1 1L5 5L9 1" fill="none" stroke="#ddd" stroke-width="1.2"/></svg>
<div class="a" style="left:1880px;top:461px;width:2px;height:2px;background:#ddd;"></div>
<div class="a" style="left:1885px;top:461px;width:2px;height:2px;background:#ddd;"></div>
<div class="a" style="left:1890px;top:461px;width:2px;height:2px;background:#ddd;"></div>
<div class="a" style="left:1598px;top:471px;width:298px;height:14px;background:#262626;"></div>
<div class="a" style="left:1600px;top:472px;width:18px;height:13px;background:#4a80ae;border-radius:4px 4px 0 0"></div>
<div class="a" style="left:1622px;top:472px;width:18px;height:13px;background:#d9dcb8;border-radius:4px 4px 0 0"></div>
<div class="a" style="left:1644px;top:472px;width:18px;height:13px;background:#f2bd58;border-radius:4px 4px 0 0"></div>
<div class="a" style="left:1666px;top:472px;width:18px;height:13px;background:#c4ad98;border-radius:4px 4px 0 0"></div>
<div class="a" style="left:1688px;top:472px;width:18px;height:13px;background:#de6a5f;border-radius:4px 4px 0 0"></div>
<div class="a" style="left:1593px;top:490px;width:38.5px;height:22px;background:#444;border-radius:4px 4px 0 0"></div>
<div class="t" style="left:1598px;top:493.5px;height:16px;line-height:16px;color:#e8e8e8;">Align</div>
<div class="a" style="left:1593px;top:512px;width:321px;height:68px;background:#444;"></div>
<div class="t" style="left:1601px;top:523.5px;height:16px;line-height:16px;color:#e8e8e8;">Alignment</div>
<div class="t" style="left:1601px;top:551.5px;height:16px;line-height:16px;color:#e8e8e8;">Distribution</div>
<div class="a" style="left:1790px;top:523px;width:54px;height:17px;background:#262626;border-radius:4px;border:1px solid #5a5a5a"></div>
<div class="a" style="left:1808px;top:524px;width:1px;height:15px;background:#5a5a5a;"></div>
<div class="a" style="left:1826px;top:524px;width:1px;height:15px;background:#5a5a5a;"></div>
<div class="a" style="left:1852px;top:523px;width:54px;height:17px;background:#262626;border-radius:4px;border:1px solid #5a5a5a"></div>
<div class="a" style="left:1870px;top:524px;width:1px;height:15px;background:#5a5a5a;"></div>
<div class="a" style="left:1888px;top:524px;width:1px;height:15px;background:#5a5a5a;"></div>
<div class="a" style="left:1790px;top:551px;width:54px;height:17px;background:#262626;border-radius:4px;border:1px solid #5a5a5a"></div>
<div class="a" style="left:1808px;top:552px;width:1px;height:15px;background:#5a5a5a;"></div>
<div class="a" style="left:1826px;top:552px;width:1px;height:15px;background:#5a5a5a;"></div>
<svg class="a" style="left:1794px;top:526px;" width="11" height="11" viewBox="0 0 11 11"><path d="M1 0V11" stroke="#eee" stroke-width="1.4"/><path d="M3 3H9M3 8H11" stroke="#eee" stroke-width="1.8"/></svg>
<svg class="a" style="left:1812px;top:526px;" width="11" height="11" viewBox="0 0 11 11"><path d="M5.5 0V11" stroke="#eee" stroke-width="1.4"/><path d="M2 3H9M0 8H11" stroke="#eee" stroke-width="1.8"/></svg>
<svg class="a" style="left:1830px;top:526px;" width="11" height="11" viewBox="0 0 11 11"><path d="M10 0V11" stroke="#eee" stroke-width="1.4"/><path d="M2 3H8M0 8H8" stroke="#eee" stroke-width="1.8"/></svg>
<svg class="a" style="left:1856px;top:526px;" width="11" height="11" viewBox="0 0 11 11"><path d="M0 1H11" stroke="#eee" stroke-width="1.4"/><path d="M3.5 3V11M8 3V7" stroke="#eee" stroke-width="1.8"/></svg>
<svg class="a" style="left:1874px;top:526px;" width="11" height="11" viewBox="0 0 11 11"><path d="M0 5.5H11" stroke="#eee" stroke-width="1.4"/><path d="M3.5 0V11M8 2V9" stroke="#eee" stroke-width="1.8"/></svg>
<svg class="a" style="left:1892px;top:526px;" width="11" height="11" viewBox="0 0 11 11"><path d="M0 10H11" stroke="#eee" stroke-width="1.4"/><path d="M3.5 4V8M8 0V8" stroke="#eee" stroke-width="1.8"/></svg>
<svg class="a" style="left:1794px;top:554px;" width="11" height="11" viewBox="0 0 11 11"><path d="M1 0V11M10 0V11" stroke="#eee" stroke-width="1.4"/><path d="M5.5 2V9" stroke="#eee" stroke-width="2.2"/></svg>
<svg class="a" style="left:1812px;top:554px;" width="11" height="11" viewBox="0 0 11 11"><path d="M0 1H11M0 10H11" stroke="#eee" stroke-width="1.4"/><path d="M2 5.5H9" stroke="#eee" stroke-width="2.2"/></svg>
<svg class="a" style="left:1830px;top:554px;" width="11" height="11" viewBox="0 0 11 11"><path d="M0 3V0.5H2.5M8.5 0.5H11V3M0 8V10.5H2.5M8.5 10.5H11V8" fill="none" stroke="#eee" stroke-width="1.2"/><path d="M2.5 8.5L5 6L6.5 7L9 3.5" fill="none" stroke="#eee" stroke-width="1.8"/></svg>
<div class="a" style="left:494px;top:586px;width:89px;height:22px;background:#444;border-radius:4px 4px 0 0"></div>
<div class="t" style="left:499px;top:589.5px;height:16px;line-height:16px;color:#e8e8e8;">Scene Window</div>
<div class="a" style="left:585px;top:586px;width:99px;height:22px;background:#2b2b2b;border-radius:4px 4px 0 0"></div>
<div class="t" style="left:589px;top:589.5px;height:16px;line-height:16px;color:#e8e8e8;">JavaScript Editor</div>
<div class="a" style="left:686px;top:586px;width:111px;height:22px;background:#2b2b2b;border-radius:4px 4px 0 0"></div>
<div class="t" style="left:690px;top:589.5px;height:16px;line-height:16px;color:#e8e8e8;">Dependency Graph</div>
<div class="a" style="left:494px;top:608px;width:1419px;height:22px;background:#2b2b2b;"></div>
<div class="t" style="left:803px;top:612px;height:16px;line-height:16px;color:#a4aab6;">Composition 1</div>
<svg class="a" style="left:1186px;top:616px;" width="8" height="8" viewBox="0 0 8 8"><path d="M0.5 0.5L7.5 7.5M7.5 0.5L0.5 7.5" stroke="#999" stroke-width="1.1"/></svg>
<div class="a" style="left:1203px;top:610px;width:706px;height:20px;background:#444;border-radius:4px 4px 0 0"></div>
<div class="t" style="left:1507px;top:612px;height:16px;line-height:16px;color:#e8e8e8;">Composition 2</div>
<svg class="a" style="left:1892px;top:616px;" width="8" height="8" viewBox="0 0 8 8"><path d="M0.5 0.5L7.5 7.5M7.5 0.5L0.5 7.5" stroke="#bbb" stroke-width="1.1"/></svg>
<div class="a" style="left:494px;top:630px;width:490px;height:42px;background:#444;"></div>
<div class="a" style="left:494px;top:672px;width:490px;height:290px;background:#2a2a2a;"></div>
<div class="a" style="left:494px;top:962px;width:476px;height:14px;background:#2c2c2c;"></div>
<div class="a" style="left:970px;top:962px;width:14px;height:14px;background:#222;"></div>
<div class="a" style="left:496px;top:632px;width:280px;height:20px;background:#2a2a2a;border-radius:10px"></div>
<svg class="a" style="left:500px;top:635px;" width="14" height="14" viewBox="0 0 14 14"><circle cx="5.5" cy="5.5" r="4.6" fill="none" stroke="#ddd" stroke-width="1.2"/><path d="M9 9L12.3 12.3" stroke="#ddd" stroke-width="2" stroke-linecap="round"/></svg>
<div class="t" style="left:520px;top:634.5px;height:16px;line-height:16px;color:#8a8a8a;">Enter a layer name</div>
<div class="a b" style="left:778px;top:632px;width:20px;height:20px;"></div>
<svg class="a" style="left:782px;top:636px;" width="12" height="12" viewBox="0 0 12 12"><path d="M6 0.5V11.5M0.5 6H11.5" stroke="#eee" stroke-width="1.6"/></svg>
<svg class="a" style="left:793.5px;top:647.5px;" width="3" height="3" viewBox="0 0 3 3"><path d="M3 0V3H0Z" fill="#5fc7a0"/></svg>
<div class="a b" style="left:822px;top:632px;width:20px;height:20px;background:#4a4a4a"></div>
<svg class="a" style="left:825px;top:634px;" width="15" height="15" viewBox="0 0 15 15"><circle cx="10" cy="5" r="4" fill="#ddd"/><path d="M3 7A6 6 0 0 0 8.5 12.5M1 9.5A7 7 0 0 0 6 14" fill="none" stroke="#888" stroke-width="1.5"/></svg>
<div class="a b" style="left:844px;top:632px;width:20px;height:20px;"></div>
<svg class="a" style="left:848px;top:635px;" width="13" height="13" viewBox="0 0 13 13"><g fill="#ddd"><circle cx="2" cy="2" r="1.1"/><circle cx="8" cy="2" r="1.1"/><circle cx="2" cy="8" r="1.1"/><path d="M8 5L9 8L12 9L9 10L8 13L7 10L4 9L7 8Z"/></g></svg>
<svg class="a" style="left:859.5px;top:647.5px;" width="3" height="3" viewBox="0 0 3 3"><path d="M3 0V3H0Z" fill="#5fc7a0"/></svg>
<div class="a b" style="left:866px;top:632px;width:20px;height:20px;"></div>
<svg class="a" style="left:869px;top:636px;" width="14" height="12" viewBox="0 0 14 12"><path d="M0 1.5H4M7.5 1.5H14M0 6H8M11.5 6H14M0 10.5H3M6.5 10.5H14" stroke="#ddd" stroke-width="1.2"/><circle cx="5.7" cy="1.5" r="1.5" fill="none" stroke="#ddd"/><circle cx="9.7" cy="6" r="1.5" fill="none" stroke="#ddd"/><circle cx="4.7" cy="10.5" r="1.5" fill="none" stroke="#ddd"/></svg>
<svg class="a" style="left:881.5px;top:647.5px;" width="3" height="3" viewBox="0 0 3 3"><path d="M3 0V3H0Z" fill="#5fc7a0"/></svg>
<div class="a f" style="left:888px;top:632px;width:94px;height:20px;"></div>
<div class="t" style="left:893px;top:634.5px;height:16px;line-height:16px;color:#555;">F</div>
<div class="t" style="left:906px;top:634.5px;height:16px;line-height:16px;color:#e8e8e8;">108</div>
<svg class="a" style="left:501px;top:657px;" width="9" height="11" viewBox="0 0 9 11"><rect x="0.5" y="4.5" width="8" height="6.5" rx="0.8" fill="#ccc"/><path d="M2.2 4.5V3A2.3 2.3 0 0 1 6.8 3V4.5" fill="none" stroke="#ccc" stroke-width="1.2"/><rect x="3.8" y="6.5" width="1.4" height="2.5" fill="#444"/></svg>
<svg class="a" style="left:517px;top:658.5px;" width="13" height="9" viewBox="0 0 13 9"><path d="M0.5 4.5C3 0.5 10 0.5 12.5 4.5C10 8.5 3 8.5 0.5 4.5Z" fill="none" stroke="#ccc" stroke-width="1.1"/><circle cx="6.5" cy="4.5" r="2" fill="#ccc"/></svg>
<svg class="a" style="left:537px;top:656px;" width="12" height="13" viewBox="0 0 12 13"><path d="M6 0.6L11.4 3.3V9.7L6 12.4L0.6 9.7V3.3Z M0.6 3.3L6 6L11.4 3.3M6 6V12.4" fill="none" stroke="#ccc" stroke-width="1.1"/></svg>
<svg class="a" style="left:556px;top:657px;" width="13" height="11" viewBox="0 0 13 11"><path d="M0 3.5H2.8L6.5 0.3V10.7L2.8 7.5H0Z" fill="#ccc"/><path d="M8.3 3A3 3 0 0 1 8.3 8M10 1A5.5 5.5 0 0 1 10 10" fill="none" stroke="#ccc" stroke-width="1.2"/></svg>
<svg class="a" style="left:575px;top:656px;" width="13" height="13" viewBox="0 0 13 13"><g transform="rotate(45 6.5 6.5)"><rect x="5" y="0" width="3" height="3.2" rx="1" fill="#ccc"/><rect x="3.8" y="3" width="5.4" height="1.8" fill="#ccc"/><path d="M5.2 5h2.6v5.5L6.5 13L5.2 10.5Z" fill="none" stroke="#aaa" stroke-width="0.9"/></g></svg>
<svg class="a" style="left:593px;top:659px;" width="14" height="8" viewBox="0 0 14 8"><path d="M0 4L3.5 0H13V8H3.5Z" fill="#ccc"/><circle cx="4" cy="4" r="1.3" fill="#444"/></svg>
<div class="t" style="left:649px;top:655.5px;height:16px;line-height:16px;color:#e8e8e8;">Name</div>
<div class="a" style="left:494px;top:672.5px;width:476px;height:65.5px;background:#383838;"></div>
<div class="a" style="left:494px;top:673px;width:476px;height:20px;background:#383838;"></div>
<div class="a" style="left:496px;top:674px;width:18px;height:18px;background:#2b2b2b;border-radius:3px"></div>
<div class="a" style="left:515px;top:674px;width:18px;height:18px;background:#2b2b2b;border-radius:3px"></div>
<svg class="a" style="left:518.5px;top:677.5px;" width="12" height="11" viewBox="0 0 12 11"><circle cx="5" cy="6" r="4.3" fill="none" stroke="#ccc" stroke-width="1.1"/><path d="M3 6L5 8L10.5 1.5" fill="none" stroke="#ccc" stroke-width="1.2"/></svg>
<div class="a" style="left:573px;top:675px;width:16px;height:16px;background:#c8ef7a;border-radius:3px"></div>
<svg class="a" style="left:593px;top:679px;" width="14" height="8" viewBox="0 0 14 8"><path d="M0 4L3.5 0H13V8H3.5Z" fill="#ddd"/><circle cx="4" cy="4" r="1.3" fill="#383838"/></svg>
<svg class="a" style="left:646px;top:678px;" width="18" height="10" viewBox="0 0 18 10"><path d="M0 6.5C0.8 6.5 1.4 0.8 2.8 0.8C4.6 0.8 4.9 9.2 6.7 9.2C8.5 9.2 8.8 0.8 10.6 0.8C12.4 0.8 12.7 9.2 14.5 9.2C16 9.2 16.6 4 18 4" fill="none" stroke="#79c98e" stroke-width="1.2"/></svg>
<div class="t" style="left:667px;top:675.5px;height:16px;line-height:16px;color:#e8e8e8;">Oscillator [Position.X] Cosine</div>
<svg class="a" style="left:956.5px;top:678.5px;" width="9" height="9" viewBox="0 0 9 9"><circle cx="4.5" cy="4.5" r="3.9" fill="none" stroke="#aaa" stroke-width="1"/></svg>
<div class="a" style="left:930px;top:675px;width:21px;height:16px;background:#333;border-radius:3px"></div>
<svg class="a" style="left:932.5px;top:679px;" width="7" height="8" viewBox="0 0 7 8"><path d="M0 4L3 0.5H7V7.5H3Z" fill="#8e8252"/></svg>
<svg class="a" style="left:942.5px;top:679px;" width="7" height="8" viewBox="0 0 7 8"><path d="M0 0.5H3.5L7 4L3.5 7.5H0Z" fill="#8a4a9e"/></svg>
<div class="a" style="left:496px;top:695px;width:472px;height:20px;background:#525848;border-radius:4px"></div>
<div class="a" style="left:496px;top:696px;width:18px;height:18px;background:#4a4f3e;border-radius:3px"></div>
<div class="a" style="left:515px;top:696px;width:18px;height:18px;background:#4a4f3e;border-radius:3px"></div>
<svg class="a" style="left:518.5px;top:699.5px;" width="12" height="11" viewBox="0 0 12 11"><circle cx="5" cy="6" r="4.3" fill="none" stroke="#8a8d80" stroke-width="1.1"/><path d="M3 6L5 8L10.5 1.5" fill="none" stroke="#8a8d80" stroke-width="1.2"/></svg>
<div class="a" style="left:573px;top:697px;width:16px;height:16px;background:#90a868;border-radius:3px"></div>
<svg class="a" style="left:593px;top:701px;" width="14" height="8" viewBox="0 0 14 8"><path d="M0 4L3.5 0H13V8H3.5Z" fill="#8a8d80"/><circle cx="4" cy="4" r="1.3" fill="#525848"/></svg>
<svg class="a" style="left:646px;top:700px;" width="18" height="10" viewBox="0 0 18 10"><path d="M0 6.5C0.8 6.5 1.4 0.8 2.8 0.8C4.6 0.8 4.9 9.2 6.7 9.2C8.5 9.2 8.8 0.8 10.6 0.8C12.4 0.8 12.7 9.2 14.5 9.2C16 9.2 16.6 4 18 4" fill="none" stroke="#6da47a" stroke-width="1.2"/></svg>
<div class="t" style="left:667px;top:697.5px;height:16px;line-height:16px;color:#9a9d90;text-decoration:line-through;">Oscillator [Position.X] Sine Driver</div>
<svg class="a" style="left:956.5px;top:700.5px;" width="9" height="9" viewBox="0 0 9 9"><circle cx="4.5" cy="4.5" r="3.9" fill="none" stroke="#888" stroke-width="1"/></svg>
<svg class="a" style="left:913.5px;top:700.5px;" width="9" height="9" viewBox="0 0 9 9"><circle cx="4.5" cy="4.5" r="3.8" fill="none" stroke="#888" stroke-width="1"/><path d="M1.8 7.2L7.2 1.8" stroke="#888"/></svg>
<div class="a" style="left:930px;top:697px;width:21px;height:16px;background:#222;border-radius:3px"></div>
<div class="a" style="left:940px;top:697px;width:1px;height:16px;background:#525848;"></div>
<svg class="a" style="left:932.5px;top:701px;" width="7" height="8" viewBox="0 0 7 8"><path d="M0 4L3 0.5H7V7.5H3Z" fill="#e0c060"/></svg>
<svg class="a" style="left:942.5px;top:701px;" width="7" height="8" viewBox="0 0 7 8"><path d="M0 0.5H3.5L7 4L3.5 7.5H0Z" fill="#c050e0"/></svg>
<div class="a" style="left:494px;top:717px;width:476px;height:20px;background:#383838;"></div>
<div class="a" style="left:496px;top:718px;width:18px;height:18px;background:#2b2b2b;border-radius:3px"></div>
<div class="a" style="left:515px;top:718px;width:18px;height:18px;background:#2b2b2b;border-radius:3px"></div>
<div class="a" style="left:534px;top:718px;width:18px;height:18px;background:#2b2b2b;border-radius:3px"></div>
<svg class="a" style="left:517.5px;top:722.5px;" width="13" height="9" viewBox="0 0 13 9"><path d="M0.5 4.5C3 0.5 10 0.5 12.5 4.5C10 8.5 3 8.5 0.5 4.5Z" fill="none" stroke="#ccc" stroke-width="1.1"/><circle cx="6.5" cy="4.5" r="2" fill="#ccc"/></svg>
<div class="a" style="left:573px;top:719px;width:16px;height:16px;background:#ffe57f;border-radius:3px"></div>
<svg class="a" style="left:593px;top:723px;" width="14" height="8" viewBox="0 0 14 8"><path d="M0 4L3.5 0H13V8H3.5Z" fill="#ddd"/><circle cx="4" cy="4" r="1.3" fill="#383838"/></svg>
<svg class="a" style="left:649px;top:721px;" width="12" height="12" viewBox="0 0 12 12"><path d="M3.5 1H8.5M3.5 11H8.5M1 3.5V8.5M11 3.5V8.5" stroke="#ecca52" stroke-width="1.5"/><g fill="#eee"><rect x="0" y="0" width="2" height="2"/><rect x="10" y="0" width="2" height="2"/><rect x="0" y="10" width="2" height="2"/><rect x="10" y="10" width="2" height="2"/></g></svg>
<div class="t" style="left:667px;top:719.5px;height:16px;line-height:16px;color:#e8e8e8;">Ellipse Shape</div>
<svg class="a" style="left:956.5px;top:722.5px;" width="9" height="9" viewBox="0 0 9 9"><circle cx="4.5" cy="4.5" r="3.9" fill="none" stroke="#aaa" stroke-width="1"/></svg>
<div class="a" style="left:930px;top:719px;width:21px;height:16px;background:#333;border-radius:3px"></div>
<div class="a" style="left:930px;top:719px;width:10px;height:16px;background:#2b2b2b;border:1px solid #e0c060;border-radius:2px"></div>
<svg class="a" style="left:932.5px;top:723px;" width="7" height="8" viewBox="0 0 7 8"><path d="M0 4L3 0.5H7V7.5H3Z" fill="#e0c060"/></svg>
<svg class="a" style="left:942.5px;top:723px;" width="7" height="8" viewBox="0 0 7 8"><path d="M0.5 0.5L6.5 4L0.5 7.5Z" fill="#555"/></svg>
<div class="a" style="left:986px;top:807.0px;width:1.6px;height:1.6px;background:#8a8a8a;"></div>
<div class="a" style="left:986px;top:810.6px;width:1.6px;height:1.6px;background:#8a8a8a;"></div>
<div class="a" style="left:986px;top:814.2px;width:1.6px;height:1.6px;background:#8a8a8a;"></div>
<div class="a" style="left:986px;top:817.8px;width:1.6px;height:1.6px;background:#8a8a8a;"></div>
<div class="a" style="left:986px;top:821.4px;width:1.6px;height:1.6px;background:#8a8a8a;"></div>
<div class="a" style="left:972px;top:673px;width:10px;height:288px;background:#4c4c4c;border-radius:5px"></div>
<div class="a" style="left:494px;top:964px;width:475px;height:10px;background:#4c4c4c;border-radius:5px"></div>
<div class="a" style="left:494px;top:976px;width:490px;height:22px;background:#444;"></div>
<div class="a b" style="left:497px;top:978px;width:19px;height:18px;"></div>
<svg class="a" style="left:500px;top:983px;" width="13" height="8" viewBox="0 0 13 8"><path d="M0 4L3.5 0H13V8H3.5Z" fill="#ddd"/><circle cx="4" cy="4" r="1.3" fill="#2d2d2d"/></svg>
<div class="t" style="left:521px;top:979.5px;height:16px;line-height:16px;color:#e8e8e8;">1 selected</div>
<div class="a b" style="left:776px;top:978px;width:18px;height:18px;"></div>
<svg class="a" style="left:780px;top:982px;" width="10" height="10" viewBox="0 0 10 10"><rect x="0.6" y="0.6" width="8.8" height="8.8" fill="none" stroke="#ddd" stroke-width="1.1"/><rect x="3.3" y="3.3" width="3.4" height="3.4" fill="#ddd"/></svg>
<div class="a" style="left:798px;top:978px;width:184px;height:18px;background:#5a5a5a;border-radius:4px"></div>
<div class="a" style="left:798px;top:978px;width:87px;height:18px;background:#262626;border-radius:4px;border:1px solid #5a5a5a"></div>
<svg class="a" style="left:805px;top:982px;" width="12" height="10" viewBox="0 0 12 10"><path d="M1 1H11M3 5H12M0 9H10" stroke="#2fc86d" stroke-width="1.8"/></svg>
<div class="t" style="left:821px;top:979.5px;height:16px;line-height:16px;color:#e8e8e8;">Time Editor</div>
<svg class="a" style="left:893px;top:982px;" width="12" height="11" viewBox="0 0 12 11"><path d="M1.5 0V9H12" fill="none" stroke="#ddd" stroke-width="1.1"/><path d="M0 11L11 2" stroke="#ddd" stroke-width="1.1"/></svg>
<div class="t" style="left:910px;top:979.5px;height:16px;line-height:16px;color:#e8e8e8;">Graph Editor</div>
<div class="a" style="left:988px;top:630px;width:926px;height:332px;background:#222;"></div>
<div class="a" style="left:991px;top:630px;width:923px;height:24px;background:#262626;"></div>
<div class="a" style="left:1000px;top:672px;width:905.5px;height:290px;background:#282828;"></div>
<div class="a" style="left:991px;top:673px;width:923px;height:20px;background:#2b2b2b;"></div>
<div class="a" style="left:988px;top:962px;width:926px;height:14px;background:#2c2c2c;"></div>
<svg class="a" style="left:991px;top:630px;" width="922" height="24" viewBox="0 0 922 24"><rect x="8.3" y="16.5" width="1.4" height="7.5" fill="#c8c8c8"/><rect x="19.3" y="20" width="1.2" height="4" fill="#bdbdbd"/><rect x="30.1" y="20" width="1.2" height="4" fill="#bdbdbd"/><rect x="41.0" y="20" width="1.2" height="4" fill="#bdbdbd"/><rect x="51.9" y="20" width="1.2" height="4" fill="#bdbdbd"/><rect x="62.6" y="16.5" width="1.4" height="7.5" fill="#c8c8c8"/><rect x="73.6" y="20" width="1.2" height="4" fill="#bdbdbd"/><rect x="84.4" y="20" width="1.2" height="4" fill="#bdbdbd"/><rect x="95.3" y="20" width="1.2" height="4" fill="#bdbdbd"/><rect x="106.2" y="20" width="1.2" height="4" fill="#bdbdbd"/><rect x="116.9" y="16.5" width="1.4" height="7.5" fill="#c8c8c8"/><rect x="127.9" y="20" width="1.2" height="4" fill="#bdbdbd"/><rect x="138.8" y="20" width="1.2" height="4" fill="#bdbdbd"/><rect x="149.6" y="20" width="1.2" height="4" fill="#bdbdbd"/><rect x="160.5" y="20" width="1.2" height="4" fill="#bdbdbd"/><rect x="171.2" y="16.5" width="1.4" height="7.5" fill="#c8c8c8"/><rect x="182.2" y="20" width="1.2" height="4" fill="#bdbdbd"/><rect x="193.1" y="20" width="1.2" height="4" fill="#bdbdbd"/><rect x="203.9" y="20" width="1.2" height="4" fill="#bdbdbd"/><rect x="214.8" y="20" width="1.2" height="4" fill="#bdbdbd"/><rect x="225.6" y="16.5" width="1.4" height="7.5" fill="#c8c8c8"/><rect x="236.5" y="20" width="1.2" height="4" fill="#bdbdbd"/><rect x="247.4" y="20" width="1.2" height="4" fill="#bdbdbd"/><rect x="258.2" y="20" width="1.2" height="4" fill="#bdbdbd"/><rect x="269.1" y="20" width="1.2" height="4" fill="#bdbdbd"/><rect x="279.9" y="16.5" width="1.4" height="7.5" fill="#c8c8c8"/><rect x="290.8" y="20" width="1.2" height="4" fill="#bdbdbd"/><rect x="301.7" y="20" width="1.2" height="4" fill="#bdbdbd"/><rect x="312.6" y="20" width="1.2" height="4" fill="#bdbdbd"/><rect x="323.4" y="20" width="1.2" height="4" fill="#bdbdbd"/><rect x="334.2" y="16.5" width="1.4" height="7.5" fill="#c8c8c8"/><rect x="345.2" y="20" width="1.2" height="4" fill="#bdbdbd"/><rect x="356.0" y="20" width="1.2" height="4" fill="#bdbdbd"/><rect x="366.9" y="20" width="1.2" height="4" fill="#bdbdbd"/><rect x="377.7" y="20" width="1.2" height="4" fill="#bdbdbd"/><rect x="388.5" y="16.5" width="1.4" height="7.5" fill="#c8c8c8"/><rect x="399.5" y="20" width="1.2" height="4" fill="#bdbdbd"/><rect x="410.3" y="20" width="1.2" height="4" fill="#bdbdbd"/><rect x="421.2" y="20" width="1.2" height="4" fill="#bdbdbd"/><rect x="432.1" y="20" width="1.2" height="4" fill="#bdbdbd"/><rect x="442.8" y="16.5" width="1.4" height="7.5" fill="#c8c8c8"/><rect x="453.8" y="20" width="1.2" height="4" fill="#bdbdbd"/><rect x="464.6" y="20" width="1.2" height="4" fill="#bdbdbd"/><rect x="475.5" y="20" width="1.2" height="4" fill="#bdbdbd"/><rect x="486.4" y="20" width="1.2" height="4" fill="#bdbdbd"/><rect x="497.1" y="16.5" width="1.4" height="7.5" fill="#c8c8c8"/><rect x="508.1" y="20" width="1.2" height="4" fill="#bdbdbd"/><rect x="519.0" y="20" width="1.2" height="4" fill="#bdbdbd"/><rect x="529.8" y="20" width="1.2" height="4" fill="#bdbdbd"/><rect x="540.7" y="20" width="1.2" height="4" fill="#bdbdbd"/><rect x="551.5" y="16.5" width="1.4" height="7.5" fill="#c8c8c8"/><rect x="562.4" y="20" width="1.2" height="4" fill="#bdbdbd"/><rect x="573.3" y="20" width="1.2" height="4" fill="#bdbdbd"/><rect x="584.1" y="20" width="1.2" height="4" fill="#bdbdbd"/><rect x="595.0" y="20" width="1.2" height="4" fill="#bdbdbd"/><rect x="605.8" y="16.5" width="1.4" height="7.5" fill="#c8c8c8"/><rect x="616.7" y="20" width="1.2" height="4" fill="#bdbdbd"/><rect x="627.6" y="20" width="1.2" height="4" fill="#bdbdbd"/><rect x="638.5" y="20" width="1.2" height="4" fill="#bdbdbd"/><rect x="649.3" y="20" width="1.2" height="4" fill="#bdbdbd"/><rect x="660.1" y="16.5" width="1.4" height="7.5" fill="#c8c8c8"/><rect x="671.0" y="20" width="1.2" height="4" fill="#bdbdbd"/><rect x="681.9" y="20" width="1.2" height="4" fill="#bdbdbd"/><rect x="692.8" y="20" width="1.2" height="4" fill="#bdbdbd"/><rect x="703.6" y="20" width="1.2" height="4" fill="#bdbdbd"/><rect x="714.4" y="16.5" width="1.4" height="7.5" fill="#c8c8c8"/><rect x="725.4" y="20" width="1.2" height="4" fill="#bdbdbd"/><rect x="736.2" y="20" width="1.2" height="4" fill="#bdbdbd"/><rect x="747.1" y="20" width="1.2" height="4" fill="#bdbdbd"/><rect x="757.9" y="20" width="1.2" height="4" fill="#bdbdbd"/><rect x="768.7" y="16.5" width="1.4" height="7.5" fill="#c8c8c8"/><rect x="779.7" y="20" width="1.2" height="4" fill="#bdbdbd"/><rect x="790.5" y="20" width="1.2" height="4" fill="#bdbdbd"/><rect x="801.4" y="20" width="1.2" height="4" fill="#bdbdbd"/><rect x="812.3" y="20" width="1.2" height="4" fill="#bdbdbd"/><rect x="823.0" y="16.5" width="1.4" height="7.5" fill="#c8c8c8"/><rect x="834.0" y="20" width="1.2" height="4" fill="#bdbdbd"/><rect x="844.9" y="20" width="1.2" height="4" fill="#bdbdbd"/><rect x="855.7" y="20" width="1.2" height="4" fill="#bdbdbd"/><rect x="866.6" y="20" width="1.2" height="4" fill="#bdbdbd"/><rect x="877.3" y="16.5" width="1.4" height="7.5" fill="#c8c8c8"/><rect x="888.3" y="20" width="1.2" height="4" fill="#bdbdbd"/><rect x="899.2" y="20" width="1.2" height="4" fill="#bdbdbd"/><rect x="910.0" y="20" width="1.2" height="4" fill="#bdbdbd"/><rect x="920.9" y="20" width="1.2" height="4" fill="#bdbdbd"/></svg>
<div class="t" style="left:978.8px;top:631px;width:40px;text-align:center;height:17px;line-height:17px;font-size:12px;color:#e6e6e6">0</div>
<div class="t" style="left:1033.5px;top:631px;width:40px;text-align:center;height:17px;line-height:17px;font-size:12px;color:#e6e6e6">15</div>
<div class="t" style="left:1087.8px;top:631px;width:40px;text-align:center;height:17px;line-height:17px;font-size:12px;color:#e6e6e6">30</div>
<div class="t" style="left:1142.1px;top:631px;width:40px;text-align:center;height:17px;line-height:17px;font-size:12px;color:#e6e6e6">45</div>
<div class="t" style="left:1196.5px;top:631px;width:40px;text-align:center;height:17px;line-height:17px;font-size:12px;color:#e6e6e6">60</div>
<div class="t" style="left:1250.8px;top:631px;width:40px;text-align:center;height:17px;line-height:17px;font-size:12px;color:#e6e6e6">75</div>
<div class="t" style="left:1305.1px;top:631px;width:40px;text-align:center;height:17px;line-height:17px;font-size:12px;color:#e6e6e6">90</div>
<div class="t" style="left:1360.3px;top:631px;width:40px;text-align:center;height:17px;line-height:17px;font-size:12px;color:#e6e6e6">105</div>
<div class="t" style="left:1414.6px;top:631px;width:40px;text-align:center;height:17px;line-height:17px;font-size:12px;color:#e6e6e6">120</div>
<div class="t" style="left:1468.9px;top:631px;width:40px;text-align:center;height:17px;line-height:17px;font-size:12px;color:#e6e6e6">135</div>
<div class="t" style="left:1523.2px;top:631px;width:40px;text-align:center;height:17px;line-height:17px;font-size:12px;color:#e6e6e6">150</div>
<div class="t" style="left:1577.6px;top:631px;width:40px;text-align:center;height:17px;line-height:17px;font-size:12px;color:#e6e6e6">165</div>
<div class="t" style="left:1631.9px;top:631px;width:40px;text-align:center;height:17px;line-height:17px;font-size:12px;color:#e6e6e6">180</div>
<div class="t" style="left:1686.2px;top:631px;width:40px;text-align:center;height:17px;line-height:17px;font-size:12px;color:#e6e6e6">195</div>
<div class="t" style="left:1740.5px;top:631px;width:40px;text-align:center;height:17px;line-height:17px;font-size:12px;color:#e6e6e6">210</div>
<div class="t" style="left:1794.8px;top:631px;width:40px;text-align:center;height:17px;line-height:17px;font-size:12px;color:#e6e6e6">225</div>
<div class="t" style="left:1849.1px;top:631px;width:40px;text-align:center;height:17px;line-height:17px;font-size:12px;color:#e6e6e6">240</div>
<div class="a" style="left:1000px;top:654px;width:905px;height:16px;background:#444;"></div>
<div class="a" style="left:995px;top:653px;width:5px;height:18px;background:#6fc7b0;border-radius:1px"></div>
<div class="a" style="left:1905px;top:653px;width:5px;height:18px;background:#6fc7b0;border-radius:1px"></div>
<div class="a" style="left:1000px;top:674px;width:905px;height:18px;background:#b6da70;border-radius:3px 0 0 3px;background-image:repeating-linear-gradient(135deg,#b6da70 0,#b6da70 6.6px,#d9f98d 6.6px,#d6f78a 10.5px,#c9ef7d 10.5px,#c9ef7d 18.5px,#b6da70 18.5px,#b6da70 24.9px)"></div>
<div class="t" style="left:1008px;top:675px;height:16px;line-height:16px;color:#222;">Oscillator [Position.X] Cosine</div>
<div class="a" style="left:1000px;top:696px;width:905px;height:18px;background:#e4f5b2;border:1.4px solid #fff;background-image:radial-gradient(circle,#a3cb5c 0.8px,rgba(163,203,92,0) 1.2px),repeating-linear-gradient(135deg,#d8eea2 0,#d8eea2 6.6px,#eaf9bc 6.6px,#eaf9bc 18.5px,#d8eea2 18.5px,#d8eea2 24.9px);background-size:3px 3px,auto"></div>
<div class="t" style="left:1008px;top:697px;height:16px;line-height:16px;color:#222;">Oscillator [Position.X] Sine Driver</div>
<div class="a" style="left:1000px;top:718px;width:905px;height:18px;background:#ffe57f;border-radius:3px"></div>
<div class="t" style="left:1008px;top:719px;height:16px;line-height:16px;color:#222;">Ellipse Shape</div>
<div class="a" style="left:1390.5px;top:654px;width:1.6px;height:308px;background:#6fc7b0;"></div>
<svg class="a" style="left:1384px;top:644px;" width="14" height="10" viewBox="0 0 14 10"><path d="M0.5 0.5H13.5L7.5 9H6.5Z" fill="#6fc7b0"/></svg>
<div class="a" style="left:992px;top:964px;width:920px;height:10px;background:#4c4c4c;border-radius:5px"></div>
<div class="a" style="left:991px;top:976px;width:923px;height:22px;background:#444;"></div>
<div class="a" style="left:994px;top:978px;width:18px;height:18px;background:#222;border-radius:4px"></div>
<svg class="a" style="left:996px;top:981px;" width="14" height="12" viewBox="0 0 14 12"><path d="M0 1H14M0 5H14" stroke="#ddd" stroke-width="1.6"/><path d="M0 9.5H3M5 9.5H7M9 9.5H11" stroke="#ddd" stroke-width="1.6"/><path d="M14 9v3h-3z" fill="#5fc7a0"/></svg>
<div class="a f" style="left:1015px;top:979px;width:150px;height:16px;"></div>
<div class="t" style="left:1018px;top:979.5px;height:16px;line-height:16px;color:#e8e8e8;">Default Keyframe Layer</div>
<div class="a f" style="left:1171px;top:979px;width:70px;height:16px;"></div>
<div class="t" style="left:1176px;top:979.5px;height:16px;line-height:16px;color:#555;">F</div>
<div class="t" style="left:1188px;top:979.5px;height:16px;line-height:16px;color:#e8e8e8;">-</div>
<div class="t" style="left:1247px;top:979.5px;height:16px;line-height:16px;color:#e8e8e8;">Align:</div>
<div class="a" style="left:1283px;top:978px;width:53px;height:18px;background:#262626;border-radius:4px;border:1px solid #5a5a5a"></div>
<div class="a" style="left:1300px;top:979px;width:1px;height:16px;background:#5a5a5a;"></div>
<div class="a" style="left:1318px;top:979px;width:1px;height:16px;background:#5a5a5a;"></div>
<svg class="a" style="left:1286px;top:982px;" width="12" height="11" viewBox="0 0 12 11"><path d="M0.6 -1V11" stroke="#eee" stroke-width="1.2"/><rect x="3" y="1.5" width="2" height="2" fill="#5fd0b0"/><rect x="5.8" y="1.5" width="3" height="2" fill="#eee"/><rect x="3" y="6.5" width="2" height="2" fill="#5fd0b0"/><rect x="5.8" y="6.5" width="6.5" height="2" fill="#eee"/></svg>
<svg class="a" style="left:1304px;top:982px;" width="12" height="11" viewBox="0 0 12 11"><path d="M6.5 -1V11" stroke="#eee" stroke-width="1.2"/><rect x="3" y="1.5" width="1.6" height="2" fill="#eee"/><rect x="5.5" y="1.5" width="2" height="2" fill="#5fd0b0"/><rect x="8.4" y="1.5" width="1.6" height="2" fill="#eee"/><rect x="1" y="6.5" width="3.6" height="2" fill="#eee"/><rect x="5.5" y="6.5" width="2" height="2" fill="#5fd0b0"/><rect x="8.4" y="6.5" width="3.6" height="2" fill="#eee"/></svg>
<svg class="a" style="left:1322px;top:982px;" width="12" height="11" viewBox="0 0 12 11"><path d="M11.6 -1V11" stroke="#eee" stroke-width="1.2"/><rect x="7.2" y="1.5" width="2" height="2" fill="#5fd0b0"/><rect x="3.4" y="1.5" width="3" height="2" fill="#eee"/><rect x="7.2" y="6.5" width="2" height="2" fill="#5fd0b0"/><rect x="0" y="6.5" width="6.4" height="2" fill="#eee"/></svg>
<div class="a b" style="left:1340px;top:978px;width:18px;height:18px;"></div>
<svg class="a" style="left:1343px;top:981px;" width="12" height="12" viewBox="0 0 12 12"><rect x="1" y="1" width="10" height="10" fill="none" stroke="#ddd" stroke-width="1.1" stroke-dasharray="4 2"/><rect x="4.5" y="4.5" width="3" height="3" fill="#ddd"/></svg>
<div class="a" style="left:1361px;top:978px;width:31px;height:18px;background:#2a2a2a;border-radius:4px;border:1px solid #222"></div>
<div class="a" style="left:1362px;top:979px;width:18px;height:16px;background:#393939;border-radius:3px 0 0 3px"></div>
<div class="a" style="left:1380px;top:979px;width:1px;height:16px;background:#222;"></div>
<svg class="a" style="left:1383px;top:983.5px;" width="6" height="7" viewBox="0 0 6 7"><path d="M0.6 0.6L5.4 3.5L0.6 6.4Z" fill="none" stroke="#8a8a8a" stroke-width="1"/></svg>
<svg class="a" style="left:1364px;top:980.5px;" width="13" height="13" viewBox="0 0 13 13"><g transform="rotate(45 6.5 6.5)"><path d="M3 11V6A3.5 3.5 0 0 1 10 6V11" fill="none" stroke="#e2e2e2" stroke-width="2.2"/></g></svg>
<div class="a" style="left:1396px;top:978px;width:31px;height:18px;background:#2a2a2a;border-radius:4px;border:1px solid #222"></div>
<div class="a" style="left:1397px;top:979px;width:18px;height:16px;background:#393939;border-radius:3px 0 0 3px"></div>
<div class="a" style="left:1415px;top:979px;width:1px;height:16px;background:#222;"></div>
<svg class="a" style="left:1418px;top:983.5px;" width="6" height="7" viewBox="0 0 6 7"><path d="M0.6 0.6L5.4 3.5L0.6 6.4Z" fill="none" stroke="#8a8a8a" stroke-width="1"/></svg>
<svg class="a" style="left:1399px;top:982px;" width="14" height="11" viewBox="0 0 14 11"><path d="M0 5.5H2.8M10.3 5.5H13.7" stroke="#ddd" stroke-width="1.1"/><path d="M4.6 -1V12" stroke="#ddd" stroke-width="1.2"/><path d="M8 3.5V7.5" stroke="#ddd" stroke-width="1.2"/></svg>
<svg class="a" style="left:1743px;top:981px;" width="14" height="14" viewBox="0 0 14 14"><circle cx="5.5" cy="5.5" r="4.6" fill="none" stroke="#ddd" stroke-width="1.1"/><path d="M9 9L12.3 12.3" stroke="#ddd" stroke-width="1.8" stroke-linecap="round"/><path d="M3 5.5H8" stroke="#ddd" stroke-width="1.1"/></svg>
<div class="a" style="left:1772px;top:986px;width:110px;height:3px;background:#505050;border-radius:2px"></div>
<svg class="a" style="left:1762px;top:982px;" width="10" height="10" viewBox="0 0 10 10"><circle cx="5" cy="5" r="5" fill="#6fd0b0"/><circle cx="5" cy="5" r="2.2" fill="#4a9a84"/></svg>
<svg class="a" style="left:1887px;top:981px;" width="14" height="14" viewBox="0 0 14 14"><circle cx="5.5" cy="5.5" r="4.6" fill="none" stroke="#ddd" stroke-width="1.1"/><path d="M9 9L12.3 12.3" stroke="#ddd" stroke-width="1.8" stroke-linecap="round"/><path d="M3 5.5H8M5.5 3V8" stroke="#ddd" stroke-width="1.1"/></svg>
<div class="a" style="left:494px;top:1003.5px;width:1420px;height:22.5px;background:#3b3b3b;"></div>
<svg class="a" style="left:497px;top:1008px;" width="3" height="14" viewBox="0 0 3 14"><circle cx="1.5" cy="2" r="1" fill="#999"/><circle cx="1.5" cy="7" r="1" fill="#999"/><circle cx="1.5" cy="12" r="1" fill="#999"/></svg>
<div class="a b" style="left:507px;top:1006px;width:18px;height:18px;"></div>
<svg class="a" style="left:510px;top:1009px;" width="13" height="12" viewBox="0 0 13 12"><path d="M0.5 0.5H11.5V8.5H9.5V11L7 8.5H0.5Z" fill="#ddd"/><path d="M2.5 2.8H9.5M2.5 4.8H9.5M2.5 6.6H7" stroke="#333" stroke-width="0.9"/><path d="M13 9v3h-3z" fill="#5fc7a0"/></svg>
<div class="a" style="left:528px;top:1008px;width:18px;height:14px;background:#e0c060;border-radius:2px"></div>
<div class="t" style="left:533px;top:1007.5px;height:16px;line-height:16px;color:#333;">0</div>
<div class="a" style="left:554px;top:1013px;width:5px;height:5px;background:#e0c060;border-radius:50%"></div>
<div class="t" style="left:565px;top:1007.5px;height:16px;line-height:16px;color:#e8e8e8;">You are working in an unsaved scene.</div>
<div class="a" style="left:1610px;top:1006px;width:80px;height:18px;background:#dcc26a;border-radius:2px"></div>
<div class="t" style="left:1616px;top:1007.5px;height:16px;line-height:16px;color:#222;">Feedback</div>
<svg class="a" style="left:1672px;top:1009px;" width="12" height="12" viewBox="0 0 12 12"><rect x="1" y="1" width="9" height="10.5" fill="#f4f0e4" stroke="#c9b98a" stroke-width="0.6"/><path d="M2.5 4H8M2.5 6H8M2.5 8H6" stroke="#aaa" stroke-width="0.7"/><path d="M6 9L11.5 3.5L12.5 4.5L7 10L5.5 10.5Z" fill="#e06a50"/></svg>
<div class="a" style="left:1693px;top:1006px;width:109px;height:18px;background:#2fc86d;border-radius:2px"></div>
<div class="t" style="left:1698px;top:1007.5px;height:16px;line-height:16px;color:#1c1c1c;">Upgrade to Pro</div>
<svg class="a" style="left:1783px;top:1010px;" width="14" height="11" viewBox="0 0 14 11"><path d="M1 4C1 2 3 1 4 2.5L5.5 5.5C6 8 5 10 3 10C1.5 10 0.5 8 1 4Z" fill="#f0c030"/><path d="M13 4C13 2 11 1 10 2.5L8.5 5.5C8 8 9 10 11 10C12.5 10 13.5 8 13 4Z" fill="#f0c030"/></svg>
<div class="a" style="left:1805px;top:1006px;width:106px;height:18px;background:#3fa9f0;border-radius:2px"></div>
<div class="t" style="left:1810px;top:1007.5px;height:16px;line-height:16px;color:#1c1c1c;">Tips and Tricks</div>
<svg class="a" style="left:1893px;top:1009px;" width="13" height="13" viewBox="0 0 13 13"><path d="M12.5 0.5C9 0.5 5.5 2.5 3.5 6.5L6.5 9.5C10.5 7.5 12.5 4 12.5 0.5Z" fill="#eee"/><circle cx="9" cy="4" r="1.3" fill="#5aa0e0"/><path d="M3.5 6.5L1 7L3 4.5ZM6.5 9.5L6 12L8.5 10Z" fill="#e05050"/><path d="M3 9L1 12L4 10Z" fill="#f0a030"/></svg>
<div class="a" style="left:164px;top:503px;width:120px;height:32px;border:3px solid #c6ef2f"></div>
<div class="a" style="left:164px;top:979px;width:123px;height:28px;border:3px solid #c6ef2f"></div>
<svg class="a" style="left:303px;top:540px;" width="34" height="50" viewBox="0 0 34 50"><path d="M10 2.5H24V25H32L17 47.5L2 25H10Z" fill="none" stroke="#c6ef2f" stroke-width="2.6"/></svg>
<svg class="a" style="left:0px;top:0px;" width="500" height="1031" viewBox="0 0 500 1031"><path d="M184 520C184.8 521.3 187.2 525.2 188.5 528C189.8 530.8 190.9 532.0 192 536.5C193.1 541.0 194.1 547.4 195 555C195.9 562.6 196.6 568.8 197.3 582C198.0 595.2 198.6 618.3 199 634C199.4 649.7 199.8 650.7 200 676C200.2 701.3 199.9 758.7 200 786C200.1 813.3 200.1 819.0 200.5 840C200.9 861.0 201.5 894.0 202.3 912C203.1 930.0 203.8 936.6 205.2 948C206.6 959.4 208.5 972.6 210.6 980.4C212.7 988.2 216.8 992.6 218 995" fill="none" stroke="#3fa3e0" stroke-width="1.1"/><circle cx="218" cy="995" r="4.5" fill="#3fa9f0"/></svg>
</body></html>
